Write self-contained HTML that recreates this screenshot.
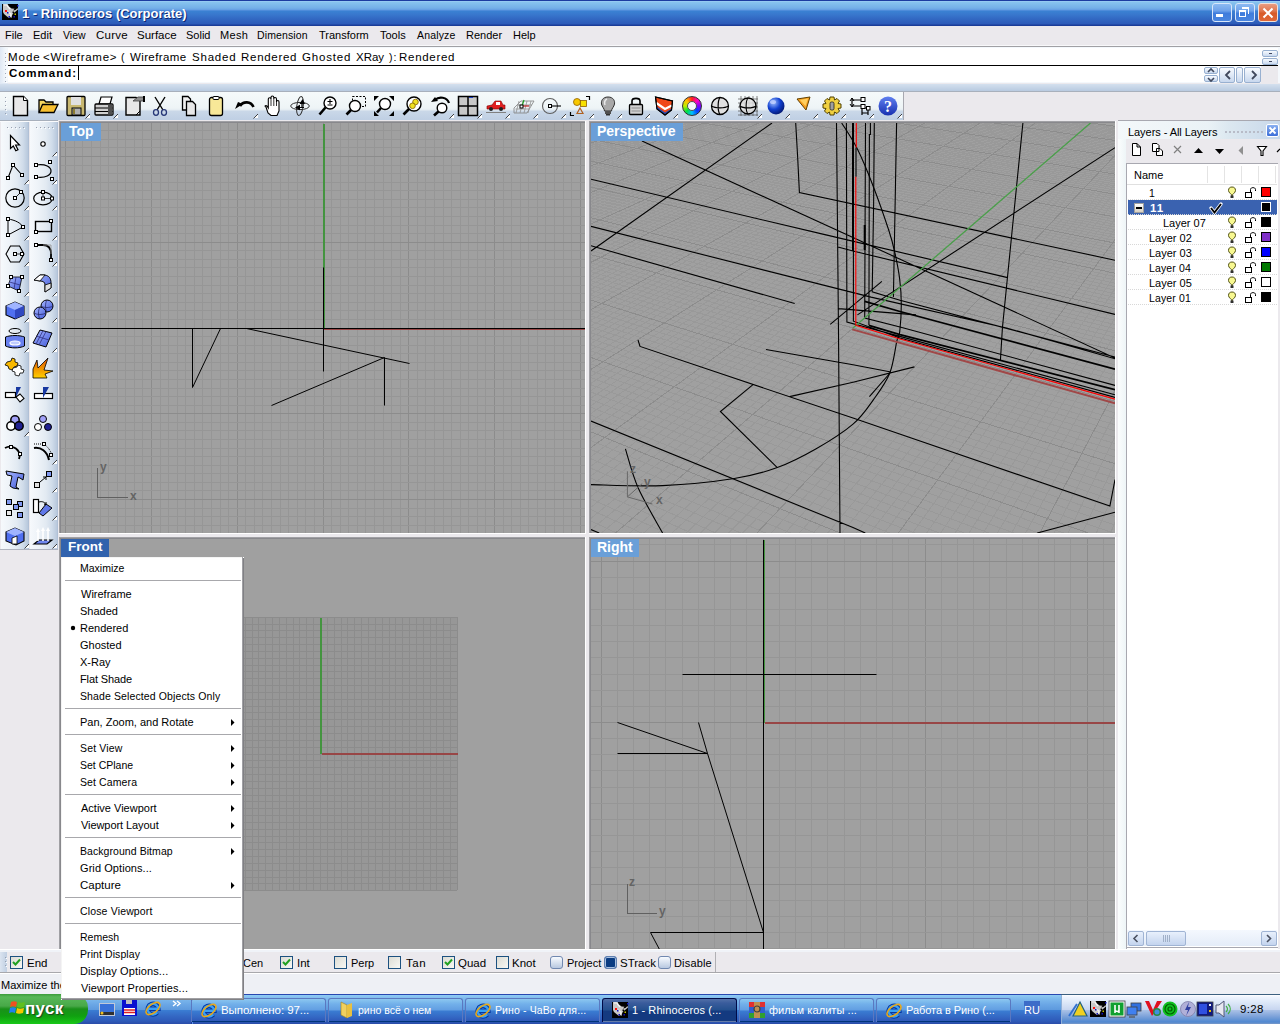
<!DOCTYPE html><html><head><meta charset="utf-8"><style>
html,body{margin:0;padding:0;}body{width:1280px;height:1024px;position:relative;overflow:hidden;background:#ebe9ed;font-family:'Liberation Sans', sans-serif;font-size:11px;}
div{box-sizing:border-box;} svg{position:absolute;overflow:visible;}
</style></head><body>
<div style="position:absolute;left:0px;top:0px;width:1280px;height:26px;background:linear-gradient(to bottom,#1c3ca0 0px,#1c3ca0 1px,#9ccff4 1px,#86c2ee 2.5px,#74b0e8 8px,#68a2e4 9.5px,#4e8cda 10.5px,#3a80d2 11.5px,#3876cc 15px,#3268c2 19px,#2c5ab8 24px,#1a3c98 25px,#1a3c98 26px);"></div>
<div style="position:absolute;left:22px;top:7px;font-family:'Liberation Sans', sans-serif;font-size:13px;font-weight:bold;font-style:normal;color:#fff;white-space:pre;line-height:1;letter-spacing:0.000px;text-shadow:1px 1px 0 #0c2470;">1 - Rhinoceros (Corporate)</div>
<div style="position:absolute;left:2px;top:4px;width:16px;height:16px;background:#000;"></div>
<svg style="left:2px;top:4px" width="16" height="16"><path d="M1 0 H5.5 L7 2.5 L9.5 4.5 L12.5 4.7 L11 6.5 L13.5 6 L15.5 4 L16 5.5 L13 8 L11 9.5 L10 11.5 L9.5 14 L8 13 L7 14 L5 12.5 L2 10 L1 8 Z" fill="#c8c8c8"/><path d="M2 1 L5 1 L6 3 L8 5" stroke="#f8f8f8" stroke-width="1.2" fill="none"/><path d="M6 8 L9 10 L8.5 12.5" stroke="#f0f0f0" stroke-width="1.5" fill="none"/><rect x="3" y="6" width="2" height="2" fill="#ff1010"/><rect x="5" y="8" width="1.5" height="1.5" fill="#1010c0"/><rect x="6.5" y="12" width="1.5" height="1.5" fill="#1010c0"/><rect x="11.5" y="12" width="1.5" height="1.5" fill="#1010c0"/><rect x="15" y="1" width="1.5" height="1.5" fill="#1010c0"/><rect x="12.5" y="9.5" width="1.5" height="1.5" fill="#c0c000"/><rect x="10.5" y="7.5" width="1.5" height="1.5" fill="#000"/></svg>
<div style="position:absolute;left:1212px;top:3px;width:20px;height:19px;background:linear-gradient(to bottom,#8cbaf2 0%,#6ea2ea 40%,#3f7cdc 55%,#4a86e0 100%);border:1px solid #d8e6fa;border-radius:3px;"></div>
<div style="position:absolute;left:1235px;top:3px;width:20px;height:19px;background:linear-gradient(to bottom,#8cbaf2 0%,#6ea2ea 40%,#3f7cdc 55%,#4a86e0 100%);border:1px solid #d8e6fa;border-radius:3px;"></div>
<div style="position:absolute;left:1258px;top:3px;width:20px;height:19px;background:linear-gradient(to bottom,#e89c80 0%,#e07850 40%,#d85a28 55%,#e06838 100%);border:1px solid #f0e0d8;border-radius:3px;"></div>
<div style="position:absolute;left:1216px;top:14px;width:7px;height:3px;background:#fff;"></div>
<div style="position:absolute;left:1239px;top:10px;width:7px;height:7px;border:1px solid #fff;border-top-width:2px;"></div>
<div style="position:absolute;left:1242px;top:7px;width:7px;height:7px;border:1px solid #fff;border-top-width:2px;border-left:none;border-bottom:none;"></div>
<svg style="left:1262px;top:7px" width="12" height="12"><path d="M1.5 1.5 L10.5 10.5 M10.5 1.5 L1.5 10.5" stroke="#fff" stroke-width="2"/></svg>
<div style="position:absolute;left:0px;top:26px;width:1280px;height:20px;background:#ebe9ed;"></div>
<div style="position:absolute;left:5px;top:30px;font-family:'Liberation Sans', sans-serif;font-size:11px;font-weight:normal;font-style:normal;color:#000;white-space:pre;line-height:1;letter-spacing:0.000px;">File</div>
<div style="position:absolute;left:33px;top:30px;font-family:'Liberation Sans', sans-serif;font-size:11px;font-weight:normal;font-style:normal;color:#000;white-space:pre;line-height:1;letter-spacing:0.000px;">Edit</div>
<div style="position:absolute;left:63px;top:30px;font-family:'Liberation Sans', sans-serif;font-size:10.5px;font-weight:normal;font-style:normal;color:#000;white-space:pre;line-height:1;letter-spacing:0.000px;">View</div>
<div style="position:absolute;left:96px;top:30px;font-family:'Liberation Sans', sans-serif;font-size:11.5px;font-weight:normal;font-style:normal;color:#000;white-space:pre;line-height:1;letter-spacing:0.250px;">Curve</div>
<div style="position:absolute;left:137px;top:30px;font-family:'Liberation Sans', sans-serif;font-size:11.5px;font-weight:normal;font-style:normal;color:#000;white-space:pre;line-height:1;letter-spacing:0.000px;">Surface</div>
<div style="position:absolute;left:186px;top:30px;font-family:'Liberation Sans', sans-serif;font-size:11px;font-weight:normal;font-style:normal;color:#000;white-space:pre;line-height:1;letter-spacing:0.000px;">Solid</div>
<div style="position:absolute;left:220px;top:30px;font-family:'Liberation Sans', sans-serif;font-size:11px;font-weight:normal;font-style:normal;color:#000;white-space:pre;line-height:1;letter-spacing:0.333px;">Mesh</div>
<div style="position:absolute;left:257px;top:30px;font-family:'Liberation Sans', sans-serif;font-size:10.5px;font-weight:normal;font-style:normal;color:#000;white-space:pre;line-height:1;letter-spacing:0.125px;">Dimension</div>
<div style="position:absolute;left:319px;top:30px;font-family:'Liberation Sans', sans-serif;font-size:11px;font-weight:normal;font-style:normal;color:#000;white-space:pre;line-height:1;letter-spacing:0.000px;">Transform</div>
<div style="position:absolute;left:380px;top:30px;font-family:'Liberation Sans', sans-serif;font-size:11px;font-weight:normal;font-style:normal;color:#000;white-space:pre;line-height:1;letter-spacing:0.000px;">Tools</div>
<div style="position:absolute;left:417px;top:30px;font-family:'Liberation Sans', sans-serif;font-size:10.5px;font-weight:normal;font-style:normal;color:#000;white-space:pre;line-height:1;letter-spacing:0.167px;">Analyze</div>
<div style="position:absolute;left:466px;top:30px;font-family:'Liberation Sans', sans-serif;font-size:11px;font-weight:normal;font-style:normal;color:#000;white-space:pre;line-height:1;letter-spacing:0.000px;">Render</div>
<div style="position:absolute;left:513px;top:30px;font-family:'Liberation Sans', sans-serif;font-size:11px;font-weight:normal;font-style:normal;color:#000;white-space:pre;line-height:1;letter-spacing:0.000px;">Help</div>
<div style="position:absolute;left:0px;top:45px;width:1280px;height:1px;background:#f8f8fa;"></div>
<div style="position:absolute;left:0px;top:46px;width:1280px;height:1px;background:#a0a0a4;"></div>
<div style="position:absolute;left:0px;top:47px;width:1280px;height:36px;background:linear-gradient(to right,#dfe8f4,#f4f8fc 6px,#f4f8fc);"></div>
<div style="position:absolute;left:8px;top:48px;width:1270px;height:34px;background:#fff;"></div>
<div style="position:absolute;left:8px;top:65px;width:1270px;height:1px;background:#000;"></div>
<div style="position:absolute;left:8px;top:52px;font-family:'Liberation Sans', sans-serif;font-size:11.5px;font-weight:normal;font-style:normal;color:#000;white-space:pre;line-height:1;letter-spacing:1.000px;">Mode</div>
<div style="position:absolute;left:43px;top:52px;font-family:'Liberation Sans', sans-serif;font-size:11.5px;font-weight:normal;font-style:normal;color:#000;white-space:pre;line-height:1;letter-spacing:0.700px;">&lt;Wireframe&gt;</div>
<div style="position:absolute;left:121px;top:52px;font-family:'Liberation Sans', sans-serif;font-size:10.5px;font-weight:normal;font-style:normal;color:#000;white-space:pre;line-height:1;letter-spacing:0.000px;">(</div>
<div style="position:absolute;left:130px;top:52px;font-family:'Liberation Sans', sans-serif;font-size:11.5px;font-weight:normal;font-style:normal;color:#000;white-space:pre;line-height:1;letter-spacing:0.375px;">Wireframe</div>
<div style="position:absolute;left:192px;top:52px;font-family:'Liberation Sans', sans-serif;font-size:11.5px;font-weight:normal;font-style:normal;color:#000;white-space:pre;line-height:1;letter-spacing:0.800px;">Shaded</div>
<div style="position:absolute;left:241px;top:52px;font-family:'Liberation Sans', sans-serif;font-size:11.5px;font-weight:normal;font-style:normal;color:#000;white-space:pre;line-height:1;letter-spacing:0.714px;">Rendered</div>
<div style="position:absolute;left:302px;top:52px;font-family:'Liberation Sans', sans-serif;font-size:11.5px;font-weight:normal;font-style:normal;color:#000;white-space:pre;line-height:1;letter-spacing:0.833px;">Ghosted</div>
<div style="position:absolute;left:356px;top:52px;font-family:'Liberation Sans', sans-serif;font-size:11.5px;font-weight:normal;font-style:normal;color:#000;white-space:pre;line-height:1;letter-spacing:0.000px;">XRay</div>
<div style="position:absolute;left:389px;top:52px;font-family:'Liberation Sans', sans-serif;font-size:10.5px;font-weight:normal;font-style:normal;color:#000;white-space:pre;line-height:1;letter-spacing:1.000px;">):</div>
<div style="position:absolute;left:399px;top:52px;font-family:'Liberation Sans', sans-serif;font-size:11.5px;font-weight:normal;font-style:normal;color:#000;white-space:pre;line-height:1;letter-spacing:0.714px;">Rendered</div>
<div style="position:absolute;left:9px;top:68px;font-family:'Liberation Sans', sans-serif;font-size:11.5px;font-weight:bold;font-style:normal;color:#000;white-space:pre;line-height:1;letter-spacing:1.000px;">Command:</div>
<div style="position:absolute;left:78px;top:66px;width:1px;height:14px;background:#000;"></div>
<div style="position:absolute;left:1261px;top:66px;width:17px;height:17px;background:#ebe9ed;"></div>
<div style="position:absolute;left:5px;top:53px;width:1px;height:1px;background:#a0a8b8;"></div>
<div style="position:absolute;left:6px;top:54px;width:1px;height:1px;background:#fff;"></div>
<div style="position:absolute;left:5px;top:57px;width:1px;height:1px;background:#a0a8b8;"></div>
<div style="position:absolute;left:6px;top:58px;width:1px;height:1px;background:#fff;"></div>
<div style="position:absolute;left:5px;top:61px;width:1px;height:1px;background:#a0a8b8;"></div>
<div style="position:absolute;left:6px;top:62px;width:1px;height:1px;background:#fff;"></div>
<div style="position:absolute;left:5px;top:65px;width:1px;height:1px;background:#a0a8b8;"></div>
<div style="position:absolute;left:6px;top:66px;width:1px;height:1px;background:#fff;"></div>
<div style="position:absolute;left:5px;top:69px;width:1px;height:1px;background:#a0a8b8;"></div>
<div style="position:absolute;left:6px;top:70px;width:1px;height:1px;background:#fff;"></div>
<div style="position:absolute;left:5px;top:73px;width:1px;height:1px;background:#a0a8b8;"></div>
<div style="position:absolute;left:6px;top:74px;width:1px;height:1px;background:#fff;"></div>
<div style="position:absolute;left:5px;top:77px;width:1px;height:1px;background:#a0a8b8;"></div>
<div style="position:absolute;left:6px;top:78px;width:1px;height:1px;background:#fff;"></div>
<div style="position:absolute;left:5px;top:81px;width:1px;height:1px;background:#a0a8b8;"></div>
<div style="position:absolute;left:6px;top:82px;width:1px;height:1px;background:#fff;"></div>
<div style="position:absolute;left:1262px;top:50px;width:16px;height:7px;background:linear-gradient(to bottom,#f8fbff,#c8d8ee);border:1px solid #98b0d0;border-radius:2px;"></div>
<div style="position:absolute;left:1262px;top:58px;width:16px;height:7px;background:linear-gradient(to bottom,#f8fbff,#c8d8ee);border:1px solid #98b0d0;border-radius:2px;"></div>
<div style="position:absolute;left:1269px;top:53px;width:3px;height:1px;background:#404860;"></div>
<div style="position:absolute;left:1269px;top:61px;width:3px;height:1px;background:#404860;"></div>
<div style="position:absolute;left:1204px;top:67px;width:14px;height:7px;background:linear-gradient(to bottom,#f8fbff,#c8d8ee);border:1px solid #98b0d0;border-radius:2px;"></div>
<div style="position:absolute;left:1204px;top:75px;width:14px;height:7px;background:linear-gradient(to bottom,#f8fbff,#c8d8ee);border:1px solid #98b0d0;border-radius:2px;"></div>
<div style="position:absolute;left:1219px;top:67px;width:16px;height:16px;background:linear-gradient(to bottom,#f8fbff,#c8d8ee);border:1px solid #98b0d0;border-radius:2px;"></div>
<div style="position:absolute;left:1236px;top:67px;width:7px;height:16px;background:linear-gradient(to bottom,#f8fbff,#c8d8ee);border:1px solid #98b0d0;border-radius:2px;"></div>
<div style="position:absolute;left:1244px;top:67px;width:17px;height:16px;background:linear-gradient(to bottom,#f8fbff,#c8d8ee);border:1px solid #98b0d0;border-radius:2px;"></div>
<svg style="left:1204px;top:67px" width="60" height="16"><path d="M4 5 L7 2 L10 5 M4 11 L7 14 L10 11" stroke="#40485c" stroke-width="1.6" fill="none"/><path d="M26 4 L22 8 L26 12 M48 4 L52 8 L48 12" stroke="#40485c" stroke-width="1.8" fill="none"/></svg>
<div style="position:absolute;left:0px;top:83px;width:1280px;height:38px;background:#ebe9ed;"></div>
<div style="position:absolute;left:0px;top:83px;width:8px;height:1px;background:#dfe8f4;"></div>
<div style="position:absolute;left:0px;top:84px;width:1280px;height:7px;background:linear-gradient(to bottom,#d4e0ee,#b8cae0);"></div>
<div style="position:absolute;left:0px;top:91px;width:1280px;height:1px;background:#a8b0bc;"></div>
<div style="position:absolute;left:0px;top:92px;width:903px;height:28px;background:linear-gradient(to bottom,#f6fafb 0px,#eef4f6 16px,#e4ecf2 18px,#cad8e8 19px,#c0d0e4 27px);"></div>
<div style="position:absolute;left:903px;top:92px;width:1px;height:28px;background:#a8a8b0;"></div>
<div style="position:absolute;left:0px;top:120px;width:1280px;height:1px;background:#ebe9ed;"></div>
<div style="position:absolute;left:0px;top:120px;width:58px;height:1px;background:#a8b0bc;"></div>
<div style="position:absolute;left:5px;top:97px;width:1px;height:1px;background:#98a0b0;"></div>
<div style="position:absolute;left:6px;top:98px;width:1px;height:1px;background:#fff;"></div>
<div style="position:absolute;left:5px;top:101px;width:1px;height:1px;background:#98a0b0;"></div>
<div style="position:absolute;left:6px;top:102px;width:1px;height:1px;background:#fff;"></div>
<div style="position:absolute;left:5px;top:105px;width:1px;height:1px;background:#98a0b0;"></div>
<div style="position:absolute;left:6px;top:106px;width:1px;height:1px;background:#fff;"></div>
<div style="position:absolute;left:5px;top:109px;width:1px;height:1px;background:#98a0b0;"></div>
<div style="position:absolute;left:6px;top:110px;width:1px;height:1px;background:#fff;"></div>
<div style="position:absolute;left:5px;top:113px;width:1px;height:1px;background:#98a0b0;"></div>
<div style="position:absolute;left:6px;top:114px;width:1px;height:1px;background:#fff;"></div>
<svg style="left:0;top:0" width="1280" height="130"><defs>
<linearGradient id="cw" x1="0" y1="0" x2="1" y2="1"><stop offset="0" stop-color="#ff2020"/><stop offset="0.25" stop-color="#f0f020"/><stop offset="0.5" stop-color="#20e040"/><stop offset="0.75" stop-color="#2040ff"/><stop offset="1" stop-color="#e020e0"/></linearGradient>
<radialGradient id="bs" cx="0.35" cy="0.3" r="0.8"><stop offset="0" stop-color="#a0c0ff"/><stop offset="0.5" stop-color="#1040d0"/><stop offset="1" stop-color="#001060"/></radialGradient>
<linearGradient id="hb" x1="0" y1="0" x2="0" y2="1"><stop offset="0" stop-color="#6080f0"/><stop offset="1" stop-color="#1830b0"/></linearGradient>
<linearGradient id="bf" x1="0" y1="0" x2="1" y2="1"><stop offset="0" stop-color="#a8b8ff"/><stop offset="1" stop-color="#4058d8"/></linearGradient>
<linearGradient id="og" x1="0" y1="0" x2="0" y2="1"><stop offset="0" stop-color="#e05000"/><stop offset="1" stop-color="#ffd000"/></linearGradient>
</defs><g transform="translate(10,96)"><path d="M3.5 0.5 H13.5 L17.5 4.5 V19.5 H3.5 Z" fill="#e8e8e8" stroke="#000" stroke-width="1.4"/><path d="M13.5 0.5 V4.5 H17.5" fill="#fff" stroke="#000" stroke-width="1"/></g><g transform="translate(38,96)"><path d="M1 16 V4 H6 L8 6 H15 V8" fill="#f8d860" stroke="#000" stroke-width="1.3"/><path d="M1 16.5 L4.5 8.5 H20 L16 16.5 Z" fill="#f8c030" stroke="#000" stroke-width="1.3"/></g><g transform="translate(66,96)"><rect x="1" y="0.5" width="18" height="19" rx="1" fill="#c8b870" stroke="#000" stroke-width="1.3"/><rect x="5" y="1" width="10" height="8" fill="#e0e0e0"/><rect x="6" y="12" width="9" height="7" fill="#b0b0b0" stroke="#000" stroke-width="1"/><rect x="7" y="13" width="2" height="5" fill="#8c7c30"/></g><path d="M86 118 L90 114 L90 118 Z" fill="#fff"/><path d="M85.5 118.5 L90 114" stroke="#404040" stroke-width="1"/><g transform="translate(94,96)"><path d="M5 8 L7 1 H18 L16 8 Z" fill="#fff" stroke="#000" stroke-width="1.2"/><rect x="1" y="8" width="18" height="11" rx="1" fill="#d0d0d0" stroke="#000" stroke-width="1.3"/><path d="M1 12 H19 M1 15.5 H19" stroke="#000" stroke-width="1.2"/><rect x="14" y="8.5" width="4.5" height="10" fill="#505050"/></g><path d="M114 118 L118 114 L118 118 Z" fill="#fff"/><path d="M113.5 118.5 L118 114" stroke="#404040" stroke-width="1"/><g transform="translate(125,96)"><path d="M1 1.5 H11 L15 5 V19 H1 Z" fill="#e8e8e8" stroke="#000" stroke-width="1.4"/><path d="M8 5 L13 1 H19 V5 H13 Z" fill="#909090" stroke="#404040" stroke-width="0.8"/><rect x="18" y="0" width="2" height="6" fill="#000"/><path d="M11 19 L15 15" stroke="#000" stroke-width="1"/></g><g transform="translate(150,96)"><path d="M5 1 L13 14 M15 1 L7 14" stroke="#000" stroke-width="1.4"/><ellipse cx="6" cy="16.5" rx="2.5" ry="2.8" fill="none" stroke="#283878" stroke-width="1.3"/><ellipse cx="14" cy="16.5" rx="2.5" ry="2.8" fill="none" stroke="#283878" stroke-width="1.3"/></g><g transform="translate(179,96)"><path d="M3.5 0.5 H9 L11.5 3 V14 H3.5 Z" fill="#f0f0f0" stroke="#000" stroke-width="1.3"/><path d="M7.5 5.5 H13.5 L16.5 8.5 V19.5 H7.5 Z" fill="#e8e8e8" stroke="#000" stroke-width="1.3"/></g><g transform="translate(206,96)"><rect x="3.5" y="1.5" width="13" height="18" rx="2" fill="#f8e898" stroke="#000" stroke-width="1.3"/><rect x="7" y="0.5" width="6" height="3" rx="1" fill="#fff" stroke="#000" stroke-width="1"/></g><g transform="translate(234,99)"><path d="M19.5 8 C17 2 9 2 6 7" stroke="#000" stroke-width="2.6" fill="none"/><path d="M1 10 L9 5 L4 3 Z" fill="#000"/></g><path d="M254 118 L258 114 L258 118 Z" fill="#fff"/><path d="M253.5 118.5 L258 114" stroke="#404040" stroke-width="1"/><g transform="translate(262,96)"><path d="M4 11 L6 17 L9 19.5 H15 L17 15 V6 Q17 4.5 15.8 4.5 Q14.5 4.5 14.5 6 V3 Q14.5 1.5 13 1.5 Q11.8 1.5 11.8 3 V1.5 Q11.8 0 10.3 0 Q9 0 9 1.5 V3 Q9 1.8 7.6 1.8 Q6.3 1.8 6.3 3 V12 L5 10 Q3.8 9 3 10 Z" fill="#fff" stroke="#000" stroke-width="1.1"/><path d="M9 3 V10 M11.8 3 V10 M14.5 6 V10" stroke="#000" stroke-width="0.8"/></g><g transform="translate(290,96)"><ellipse cx="10" cy="10" rx="9.3" ry="3.6" fill="none" stroke="#303030" stroke-width="1"/><ellipse cx="10" cy="10" rx="3.2" ry="9.5" fill="none" stroke="#303030" stroke-width="1" transform="rotate(8 10 10)"/><path d="M12.5 3 L9.5 8 H15 Z M5 11.5 L10 8.8 V14.2 Z" fill="#000"/><path d="M12 8 V12 M10 11.5 H14" stroke="#000" stroke-width="1.2"/></g><g transform="translate(318,96)"><circle cx="12" cy="7" r="6" fill="#fff" stroke="#000" stroke-width="1.4"/><path d="M7.5 11.5 L1.5 18.5" stroke="#000" stroke-width="2.6"/><path d="M9.5 5.5 H14.5 M12 3 V8 M9.5 9 H14.5" stroke="#000" stroke-width="1.1"/></g><g transform="translate(346,96)"><rect x="6.5" y="0.5" width="13" height="10" fill="none" stroke="#000" stroke-width="1" stroke-dasharray="2 1.5"/><circle cx="9" cy="10" r="5.5" fill="#fff" stroke="#000" stroke-width="1.4"/><path d="M5 14 L0.5 18.5" stroke="#000" stroke-width="2.6"/></g><g transform="translate(374,96)"><circle cx="11" cy="8" r="5.5" fill="#fff" stroke="#000" stroke-width="1.4"/><path d="M7 12 L3 16.5" stroke="#000" stroke-width="2.6"/><path d="M0 0 H5 L0 5 Z M20 0 V5 L15 0 Z M0 20 V15 L5 20 Z M20 20 H15 L20 15 Z" fill="#000"/></g><g transform="translate(402,96)"><circle cx="12" cy="8" r="7" fill="#fff" stroke="#000" stroke-width="1.4"/><circle cx="13.5" cy="6" r="2.8" fill="#f0e020" stroke="#806000" stroke-width="0.8"/><circle cx="10.5" cy="9.8" r="2.8" fill="#f0e020" stroke="#806000" stroke-width="0.8"/><path d="M7 13 L1.5 18.5" stroke="#000" stroke-width="2.6"/></g><g transform="translate(430,96)"><circle cx="12" cy="12" r="4.8" fill="#fff" stroke="#000" stroke-width="1.4"/><path d="M8.5 15.5 L4 19.5" stroke="#000" stroke-width="2.6"/><path d="M19 7 C17 1 9 0 5 4" stroke="#000" stroke-width="2.2" fill="none"/><path d="M1 6 L8 5 L5 1 Z" fill="#000"/></g><path d="M450 118 L454 114 L454 118 Z" fill="#fff"/><path d="M449.5 118.5 L454 114" stroke="#404040" stroke-width="1"/><g transform="translate(458,96)"><rect x="0.5" y="0.5" width="19" height="19" fill="#c8c8c8" stroke="#000" stroke-width="1.5"/><path d="M10 0 V20 M0 10 H20" stroke="#000" stroke-width="1.5"/><rect x="11" y="1" width="4" height="1" fill="#2040c0"/></g><path d="M478 118 L482 114 L482 118 Z" fill="#fff"/><path d="M477.5 118.5 L482 114" stroke="#404040" stroke-width="1"/><g transform="translate(486,96)"><path d="M1 13 V10 L6 9 L9 5 H15 L17 9 H19 V13 Z" fill="#e02020" stroke="#800000" stroke-width="0.6"/><rect x="10" y="6" width="4" height="3" fill="#fff"/><circle cx="5" cy="13" r="2" fill="#202020"/><circle cx="15" cy="13" r="2" fill="#202020"/><path d="M0 16.5 H20" stroke="#808080" stroke-width="1"/></g><path d="M506 118 L510 114 L510 118 Z" fill="#fff"/><path d="M505.5 118.5 L510 114" stroke="#404040" stroke-width="1"/><g transform="translate(514,96)"><path d="M0 12 L7 5 H20 L13 17 H0 Z" fill="none" stroke="#808080" stroke-width="0.8"/><path d="M3 9 H18 M1.5 13 H15 M5 5 L2 17 M9 5 L6 17 M13 5 L10 17 M17 5 L14 17" stroke="#909090" stroke-width="0.8"/><path d="M8 10 H15" stroke="#c02020" stroke-width="1.2"/><path d="M8 10 L10 4" stroke="#20a020" stroke-width="1.2"/><rect x="6" y="9" width="3" height="3" fill="#fff" stroke="#000" stroke-width="1"/></g><path d="M534 118 L538 114 L538 118 Z" fill="#fff"/><path d="M533.5 118.5 L538 114" stroke="#404040" stroke-width="1"/><g transform="translate(542,96)"><circle cx="8" cy="10" r="7.5" fill="none" stroke="#606060" stroke-width="1.1"/><path d="M8 10 H19" stroke="#000" stroke-width="1.1"/><rect x="6.5" y="8.5" width="3" height="3" fill="#fff" stroke="#000" stroke-width="1"/></g><path d="M562 118 L566 114 L566 118 Z" fill="#fff"/><path d="M561.5 118.5 L566 114" stroke="#404040" stroke-width="1"/><g transform="translate(570,96)"><circle cx="7" cy="6" r="3.5" fill="#f8c800" stroke="#906000" stroke-width="0.8"/><rect x="10.5" y="4.5" width="6" height="6" fill="#f8e000" stroke="#906000" stroke-width="0.8"/><path d="M10 12 L13 17.5 H7 Z" fill="none" stroke="#b06020" stroke-width="1.2"/><path d="M16 0.5 H19.5 V4 M0.5 16 V19.5 H4" stroke="#000" stroke-width="1.2" fill="none"/></g><path d="M590 118 L594 114 L594 118 Z" fill="#fff"/><path d="M589.5 118.5 L594 114" stroke="#404040" stroke-width="1"/><g transform="translate(598,96)"><path d="M10 1 C4.5 1 3 5 3.5 8 C4 11 6.5 12.5 6.5 15 H13.5 C13.5 12.5 16 11 16.5 8 C17 5 15.5 1 10 1 Z" fill="#a8a8a8" stroke="#303030" stroke-width="1"/><path d="M7 9 C6 6 7 4 9 3" stroke="#e8e8e8" stroke-width="1.5" fill="none"/><rect x="7" y="15" width="6" height="3" fill="#505050"/><rect x="8" y="18" width="4" height="1.5" fill="#303030"/></g><path d="M618 118 L622 114 L622 118 Z" fill="#fff"/><path d="M617.5 118.5 L622 114" stroke="#404040" stroke-width="1"/><g transform="translate(626,96)"><path d="M6 8 V5 C6 1.5 14 1.5 14 5 V8" stroke="#000" stroke-width="1.6" fill="none"/><rect x="3.5" y="8.5" width="13" height="10" rx="1" fill="#d0d0d0" stroke="#000" stroke-width="1.3"/><path d="M5.5 12 H14.5 M5.5 15 H14.5" stroke="#909090" stroke-width="1"/></g><path d="M646 118 L650 114 L650 118 Z" fill="#fff"/><path d="M645.5 118.5 L650 114" stroke="#404040" stroke-width="1"/><g transform="translate(654,96)"><path d="M1.5 1 L18.5 5 L17.5 14 L11 19 L3 13 Z" fill="#f04818" stroke="#000" stroke-width="1.1"/><path d="M2.3 7 L11 13 L17.8 9.5" stroke="#fff" stroke-width="2.2" fill="none"/><path d="M2.8 10.5 L11 16.5 L17.6 12.5 L17.5 14 L11 19 L3 13 Z" fill="#2848b0"/><path d="M1.5 1 L18.5 5 L17.5 14 L11 19 L3 13 Z" fill="none" stroke="#000" stroke-width="1.1"/></g><path d="M674 118 L678 114 L678 118 Z" fill="#fff"/><path d="M673.5 118.5 L678 114" stroke="#404040" stroke-width="1"/><g transform="translate(682,96)"></g><path d="M702 118 L706 114 L706 118 Z" fill="#fff"/><path d="M701.5 118.5 L706 114" stroke="#404040" stroke-width="1"/><g transform="translate(710,96)"><circle cx="10" cy="10" r="8.5" fill="#e0e0e0" stroke="#000" stroke-width="1.3"/><path d="M1.5 10 C5 12.5 15 12.5 18.5 10 M10 1.5 C7.5 5 7.5 15 10 18.5" stroke="#000" stroke-width="1.2" fill="none"/></g><g transform="translate(738,96)"><path d="M0 3 H20 M0 7 H20 M0 11 H20 M0 15 H20 M0 19 H20 M3 0 V20 M7 0 V20 M11 0 V20 M15 0 V20 M19 0 V20" stroke="#505050" stroke-width="0.7"/><circle cx="10" cy="10" r="8" fill="#e0e0e0" fill-opacity="0.85" stroke="#000" stroke-width="1.3"/><path d="M2 10 C5 12.5 15 12.5 18 10 M10 2 C7.5 5 7.5 15 10 18" stroke="#000" stroke-width="1.1" fill="none"/></g><path d="M758 118 L762 114 L762 118 Z" fill="#fff"/><path d="M757.5 118.5 L762 114" stroke="#404040" stroke-width="1"/><g transform="translate(766,96)"><circle cx="10" cy="10" r="8.5" fill="url(#bs)"/><ellipse cx="7" cy="6" rx="3" ry="2" fill="#c0d0ff" opacity="0.8"/></g><path d="M786 118 L790 114 L790 118 Z" fill="#fff"/><path d="M785.5 118.5 L790 114" stroke="#404040" stroke-width="1"/><g transform="translate(794,96)"><path d="M3 3 L16 1 L12 14 Z" fill="#f8a020" stroke="#604000" stroke-width="1"/><path d="M6 4 L14 2.5 L11.5 10 Z" fill="#ffd060"/></g><path d="M814 118 L818 114 L818 118 Z" fill="#fff"/><path d="M813.5 118.5 L818 114" stroke="#404040" stroke-width="1"/><g transform="translate(822,96)"><path d="M8 1 H12 L12.5 4 L15 2.5 L17.5 5 L16 7.5 L19 8 V12 L16 12.5 L17.5 15 L15 17.5 L12.5 16 L12 19 H8 L7.5 16 L5 17.5 L2.5 15 L4 12.5 L1 12 V8 L4 7.5 L2.5 5 L5 2.5 L7.5 4 Z" fill="#f0d040" stroke="#504000" stroke-width="1"/><rect x="8" y="6" width="4" height="8" rx="1.5" fill="#a0a0a0" stroke="#202020" stroke-width="0.8"/></g><path d="M842 118 L846 114 L846 118 Z" fill="#fff"/><path d="M841.5 118.5 L846 114" stroke="#404040" stroke-width="1"/><g transform="translate(850,96)"><path d="M2 2 V10 M2 4 H12 M2 10 H12 M12 10 V19 M12 12 H18 M18 12 V19 M12 17 H18" stroke="#000" stroke-width="1.2" fill="none"/><rect x="11" y="1.5" width="4" height="4" fill="#fff" stroke="#000" stroke-width="1"/><rect x="11" y="8.5" width="4" height="4" fill="#fff" stroke="#000" stroke-width="1"/><rect x="16.5" y="10.5" width="3.5" height="3.5" fill="#fff" stroke="#000" stroke-width="1"/><path d="M0 5 L2 2 L4 5 M0 8 L2 11 L4 8" stroke="#000" stroke-width="1" fill="none"/></g><path d="M870 118 L874 114 L874 118 Z" fill="#fff"/><path d="M869.5 118.5 L874 114" stroke="#404040" stroke-width="1"/><g transform="translate(878,96)"><circle cx="10" cy="10" r="9.5" fill="url(#hb)"/><text x="10" y="16" font-family="Liberation Serif" font-weight="bold" font-size="16" fill="#fff" text-anchor="middle">?</text></g><path d="M898 118 L902 114 L902 118 Z" fill="#fff"/><path d="M897.5 118.5 L902 114" stroke="#404040" stroke-width="1"/></svg>
<div style="position:absolute;left:682px;top:96px;width:20px;height:20px;border-radius:50%;background:conic-gradient(from 0deg,#ff2020,#ff00c0,#8000ff,#0040ff,#00c0ff,#00e040,#c0f000,#ffc000,#ff2020);border:1px solid #303030;"></div>
<div style="position:absolute;left:687px;top:101px;width:10px;height:10px;border-radius:50%;background:#f4f8fa;border:1px solid #505050;"></div>
<div style="position:absolute;left:0px;top:121px;width:58px;height:430px;background:#ebe9ed;"></div>
<div style="position:absolute;left:0px;top:121px;width:58px;height:1px;background:#fafbfd;"></div>
<div style="position:absolute;left:1px;top:122px;width:28px;height:427px;background:linear-gradient(to right,#f6f9fc 0px,#eef3f8 8px,#e2eaf2 16px,#d0dcea 22px,#b8c8dc 27px,#a8b8d0 28px);"></div>
<div style="position:absolute;left:7px;top:127px;width:1px;height:1px;background:#98a0b0;"></div>
<div style="position:absolute;left:8px;top:128px;width:1px;height:1px;background:#fff;"></div>
<div style="position:absolute;left:11px;top:127px;width:1px;height:1px;background:#98a0b0;"></div>
<div style="position:absolute;left:12px;top:128px;width:1px;height:1px;background:#fff;"></div>
<div style="position:absolute;left:15px;top:127px;width:1px;height:1px;background:#98a0b0;"></div>
<div style="position:absolute;left:16px;top:128px;width:1px;height:1px;background:#fff;"></div>
<div style="position:absolute;left:19px;top:127px;width:1px;height:1px;background:#98a0b0;"></div>
<div style="position:absolute;left:20px;top:128px;width:1px;height:1px;background:#fff;"></div>
<div style="position:absolute;left:23px;top:127px;width:1px;height:1px;background:#98a0b0;"></div>
<div style="position:absolute;left:24px;top:128px;width:1px;height:1px;background:#fff;"></div>
<div style="position:absolute;left:30px;top:122px;width:28px;height:427px;background:linear-gradient(to right,#f6f9fc 0px,#eef3f8 8px,#e2eaf2 16px,#d0dcea 22px,#b8c8dc 27px,#a8b8d0 28px);"></div>
<div style="position:absolute;left:36px;top:127px;width:1px;height:1px;background:#98a0b0;"></div>
<div style="position:absolute;left:37px;top:128px;width:1px;height:1px;background:#fff;"></div>
<div style="position:absolute;left:40px;top:127px;width:1px;height:1px;background:#98a0b0;"></div>
<div style="position:absolute;left:41px;top:128px;width:1px;height:1px;background:#fff;"></div>
<div style="position:absolute;left:44px;top:127px;width:1px;height:1px;background:#98a0b0;"></div>
<div style="position:absolute;left:45px;top:128px;width:1px;height:1px;background:#fff;"></div>
<div style="position:absolute;left:48px;top:127px;width:1px;height:1px;background:#98a0b0;"></div>
<div style="position:absolute;left:49px;top:128px;width:1px;height:1px;background:#fff;"></div>
<div style="position:absolute;left:52px;top:127px;width:1px;height:1px;background:#98a0b0;"></div>
<div style="position:absolute;left:53px;top:128px;width:1px;height:1px;background:#fff;"></div>
<div style="position:absolute;left:0px;top:549px;width:58px;height:1px;background:#b0b4c0;"></div>
<svg style="left:0;top:0" width="60" height="560"><defs>
<linearGradient id="Lcw" x1="0" y1="0" x2="1" y2="1"><stop offset="0" stop-color="#ff2020"/><stop offset="0.25" stop-color="#f0f020"/><stop offset="0.5" stop-color="#20e040"/><stop offset="0.75" stop-color="#2040ff"/><stop offset="1" stop-color="#e020e0"/></linearGradient>
<radialGradient id="Lbs" cx="0.35" cy="0.3" r="0.8"><stop offset="0" stop-color="#a0c0ff"/><stop offset="0.5" stop-color="#1040d0"/><stop offset="1" stop-color="#001060"/></radialGradient>
<linearGradient id="Lhb" x1="0" y1="0" x2="0" y2="1"><stop offset="0" stop-color="#6080f0"/><stop offset="1" stop-color="#1830b0"/></linearGradient>
<linearGradient id="Lbf" x1="0" y1="0" x2="1" y2="1"><stop offset="0" stop-color="#a8b8ff"/><stop offset="1" stop-color="#4058d8"/></linearGradient>
<linearGradient id="Log" x1="0" y1="0" x2="0" y2="1"><stop offset="0" stop-color="#e05000"/><stop offset="1" stop-color="#ffd000"/></linearGradient>
</defs><g transform="translate(5,134)"><path d="M5.5 1.5 V14.5 L8.3 12 L10.8 16.8 L13 15.7 L10.6 11 H14.5 Z" fill="#fff" stroke="#000" stroke-width="1.2"/></g><g transform="translate(33,134)"><circle cx="10" cy="10" r="2.2" fill="#fff" stroke="#000" stroke-width="1.1"/></g><path d="M53 156 L57 152 L57 156 Z" fill="#fff"/><path d="M52.5 156.5 L57 152" stroke="#404040" stroke-width="1"/><g transform="translate(5,162)"><path d="M3 16 L8 3 L17 13" stroke="#000" stroke-width="1.1" fill="none"/><rect x="1.5" y="14.5" width="3" height="3" fill="#fff" stroke="#000"/><rect x="6.5" y="1.5" width="3" height="3" fill="#fff" stroke="#000"/><rect x="15.5" y="11.5" width="3" height="3" fill="#fff" stroke="#000"/></g><path d="M25 184 L29 180 L29 184 Z" fill="#fff"/><path d="M24.5 184.5 L29 180" stroke="#404040" stroke-width="1"/><g transform="translate(33,162)"><path d="M3 3 C23 0 23 18 3 15" stroke="#000" stroke-width="1.2" fill="none"/><rect x="1.5" y="1.5" width="3" height="3" fill="#fff" stroke="#000"/><rect x="1.5" y="13.5" width="3" height="3" fill="#fff" stroke="#000"/><rect x="15.5" y="-1.5" width="3" height="3" fill="#fff" stroke="#000"/><rect x="17.5" y="15.5" width="3" height="3" fill="#fff" stroke="#000"/></g><path d="M53 184 L57 180 L57 184 Z" fill="#fff"/><path d="M52.5 184.5 L57 180" stroke="#404040" stroke-width="1"/><g transform="translate(5,188)"><circle cx="10" cy="10" r="9.2" fill="none" stroke="#000" stroke-width="1.2"/><path d="M10 10 L16 4" stroke="#000" stroke-width="0.8"/><rect x="8.5" y="8.5" width="3" height="3" fill="#fff" stroke="#000"/><rect x="14.5" y="2.5" width="3" height="3" fill="#fff" stroke="#000"/></g><path d="M25 210 L29 206 L29 210 Z" fill="#fff"/><path d="M24.5 210.5 L29 206" stroke="#404040" stroke-width="1"/><g transform="translate(33,188)"><ellipse cx="10" cy="10.5" rx="9.3" ry="6.3" fill="none" stroke="#000" stroke-width="1.2"/><path d="M10 4 V10.5 H19" stroke="#000" stroke-width="0.8" fill="none"/><rect x="8.5" y="2.5" width="3" height="3" fill="#fff" stroke="#000"/><rect x="8.5" y="9" width="3" height="3" fill="#fff" stroke="#000"/><rect x="17.5" y="9" width="3" height="3" fill="#fff" stroke="#000"/></g><path d="M53 210 L57 206 L57 210 Z" fill="#fff"/><path d="M52.5 210.5 L57 206" stroke="#404040" stroke-width="1"/><g transform="translate(5,218)"><path d="M3 1 C10 2 16 5 18 9 M3 1 V17 L18 9" stroke="#000" stroke-width="1" fill="none"/><rect x="1.5" y="-0.5" width="3" height="3" fill="#fff" stroke="#000"/><rect x="16.5" y="7.5" width="3" height="3" fill="#fff" stroke="#000"/><rect x="1.5" y="15.5" width="3" height="3" fill="#fff" stroke="#000"/></g><path d="M25 240 L29 236 L29 240 Z" fill="#fff"/><path d="M24.5 240.5 L29 236" stroke="#404040" stroke-width="1"/><g transform="translate(33,218)"><rect x="2.5" y="3.5" width="16" height="10" fill="none" stroke="#000" stroke-width="1.4"/><rect x="16.5" y="1.5" width="3" height="3" fill="#fff" stroke="#000"/><rect x="1.5" y="12.5" width="3" height="3" fill="#fff" stroke="#000"/></g><path d="M53 240 L57 236 L57 240 Z" fill="#fff"/><path d="M52.5 240.5 L57 236" stroke="#404040" stroke-width="1"/><g transform="translate(5,244)"><path d="M1 10 L5.5 2 H14.5 L19 10 L14.5 18 H5.5 Z" fill="none" stroke="#000" stroke-width="1.1"/><path d="M10 10 H16" stroke="#000" stroke-width="0.8"/><rect x="8.5" y="8.5" width="3" height="3" fill="#fff" stroke="#000"/><rect x="15.5" y="8.5" width="3" height="3" fill="#fff" stroke="#000"/></g><path d="M25 266 L29 262 L29 266 Z" fill="#fff"/><path d="M24.5 266.5 L29 262" stroke="#404040" stroke-width="1"/><g transform="translate(33,244)"><path d="M3 1 H10 C15 1 18 4 18 10 V15" stroke="#000" stroke-width="1.8" fill="none"/><path d="M10 1 H18 V10" stroke="#909090" stroke-width="0.8" fill="none"/><rect x="1.5" y="-0.5" width="3" height="3" fill="#fff" stroke="#000"/><rect x="16.5" y="14.5" width="3" height="3" fill="#fff" stroke="#000"/></g><path d="M53 266 L57 262 L57 266 Z" fill="#fff"/><path d="M52.5 266.5 L57 262" stroke="#404040" stroke-width="1"/><g transform="translate(5,274)"><path d="M6 3 H17 L14 17 L3 12 Z" fill="url(#Lbf)" stroke="#000" stroke-width="0.8"/><path d="M11 3 L9 15 M4.5 8 L15 11" stroke="#303080" stroke-width="0.8"/><rect x="4.5" y="1.5" width="3" height="3" fill="#fff" stroke="#000"/><rect x="15.5" y="1.5" width="3" height="3" fill="#fff" stroke="#000"/><rect x="1.5" y="10.5" width="3" height="3" fill="#fff" stroke="#000"/><rect x="12.5" y="15.5" width="3" height="3" fill="#fff" stroke="#000"/></g><path d="M25 296 L29 292 L29 296 Z" fill="#fff"/><path d="M24.5 296.5 L29 292" stroke="#404040" stroke-width="1"/><g transform="translate(33,274)"><path d="M1 6 L7 1 H12 C16 2 18 4 18 9 V14 L12 18 V11 C12 8 10 7 7 7 Z" fill="url(#Lbf)" stroke="#000" stroke-width="1"/><path d="M1 6 L7 1 H12 L7 7 Z" fill="#fff" stroke="#000" stroke-width="0.8"/><path d="M12 11 L18 9 V14 L12 18 Z" fill="#e0e0e0" stroke="#000" stroke-width="0.8"/></g><path d="M53 296 L57 292 L57 296 Z" fill="#fff"/><path d="M52.5 296.5 L57 292" stroke="#404040" stroke-width="1"/><g transform="translate(5,300)"><path d="M1 6 L10 2 L19 6 V15 L10 19 L1 15 Z" fill="#5070f0" stroke="#000" stroke-width="1.1"/><path d="M1 6 L10 2 L19 6 L10 10 Z" fill="#a0b4ff"/><path d="M10 10 L19 6 V15 L10 19 Z" fill="#3048c0"/></g><path d="M25 322 L29 318 L29 322 Z" fill="#fff"/><path d="M24.5 322.5 L29 318" stroke="#404040" stroke-width="1"/><g transform="translate(33,300)"><circle cx="14" cy="6" r="6" fill="url(#Lbf)" stroke="#000" stroke-width="1"/><circle cx="7" cy="13" r="6" fill="url(#Lbf)" stroke="#000" stroke-width="1"/><path d="M1 13 C4 15 10 15 13 13 M7 7 C5 10 5 16 7 19 M8 6 C11 8 17 8 20 6 M14 0 C12 3 12 9 14 12" stroke="#202060" stroke-width="0.7" fill="none"/></g><path d="M53 322 L57 318 L57 322 Z" fill="#fff"/><path d="M52.5 322.5 L57 318" stroke="#404040" stroke-width="1"/><g transform="translate(5,330)"><ellipse cx="10" cy="1" rx="6" ry="2.5" fill="none" stroke="#000" stroke-width="1"/><path d="M0.5 7 C6 5 14 5 19.5 7 V16 C14 18.5 6 18.5 0.5 16 Z" fill="#6880f0" stroke="#000" stroke-width="1"/><ellipse cx="10" cy="13" rx="5" ry="2" fill="#c0ccff" stroke="#fff" stroke-width="1.2"/></g><path d="M25 352 L29 348 L29 352 Z" fill="#fff"/><path d="M24.5 352.5 L29 348" stroke="#404040" stroke-width="1"/><g transform="translate(33,330)"><path d="M7 0 L19 3 L13 17 L0 13 Z" fill="url(#Lbf)" stroke="#000" stroke-width="1"/><path d="M13 1.5 L6 15 M3 6 L16 10 M10 0.7 L3 14" stroke="#303080" stroke-width="0.8"/></g><path d="M53 352 L57 348 L57 352 Z" fill="#fff"/><path d="M52.5 352.5 L57 348" stroke="#404040" stroke-width="1"/><g transform="translate(5,358)"><path d="M2 4 L6 3 L7 0 L10 1 L10 4 L13 5 L12 8 L9 9 L8 12 L4 11 L3 8 L0 7 Z" fill="#f8b800" stroke="#000" stroke-width="0.8"/><path d="M8 10 L12 9 L13 7 L16 8 L16 11 L19 12 L18 15 L15 15 L14 18 L10 17 L10 14 L7 13 Z" fill="#fff" stroke="#000" stroke-width="0.8"/></g><g transform="translate(33,358)"><path d="M0 20 V11 L4 2 L5 10 L15 0 L11 12 L20 13 L12 16 L14 20 Z" fill="url(#Log)" stroke="#000" stroke-width="0.8"/></g><g transform="translate(5,386)"><rect x="0.5" y="6.5" width="10" height="5" fill="#fff" stroke="#000" stroke-width="1.2"/><path d="M11 1 H16 L11 11 Z" fill="#1838a0"/><path d="M11 11 L15 8 L19 12.5 L15 16 Z" fill="#fff" stroke="#000" stroke-width="1.1"/></g><g transform="translate(33,386)"><rect x="1.5" y="7.5" width="18" height="5" fill="#fff" stroke="#000" stroke-width="1.2"/><path d="M10 1 H16 L10 12 Z" fill="#1838a0"/></g><g transform="translate(5,414)"><circle cx="10" cy="6" r="4.2" fill="#a0a0f8" stroke="#000" stroke-width="1.5"/><circle cx="6" cy="12" r="4.2" fill="#fff" stroke="#000" stroke-width="1.5"/><circle cx="14" cy="12" r="4.2" fill="#202090" stroke="#000" stroke-width="1.5"/></g><path d="M25 436 L29 432 L29 436 Z" fill="#fff"/><path d="M24.5 436.5 L29 432" stroke="#404040" stroke-width="1"/><g transform="translate(33,414)"><circle cx="10" cy="5" r="3.5" fill="#a0a0f8" stroke="#000" stroke-width="1"/><circle cx="5" cy="13" r="3.5" fill="#fff" stroke="#000" stroke-width="1"/><circle cx="15" cy="13" r="3.5" fill="#202090" stroke="#000" stroke-width="1"/></g><g transform="translate(5,442)"><path d="M0 6 C5 3 13 5 15 13 L14 17" stroke="#000" stroke-width="1.8" fill="none"/><rect x="4.5" y="3.5" width="3" height="3" fill="#fff" stroke="#000"/><rect x="13.5" y="10.5" width="3" height="3" fill="#fff" stroke="#000"/></g><g transform="translate(33,442)"><path d="M1 6 C8 5 14 9 16 18" stroke="#000" stroke-width="2" fill="none"/><path d="M1 2 H10 M12 3 C15 5 17 8 19 13" stroke="#000" stroke-width="1" stroke-dasharray="1 1" fill="none"/><rect x="9.5" y="0.5" width="3" height="3" fill="#fff" stroke="#000"/><rect x="16.5" y="11.5" width="3" height="3" fill="#fff" stroke="#000"/></g><path d="M53 464 L57 460 L57 464 Z" fill="#fff"/><path d="M52.5 464.5 L57 460" stroke="#404040" stroke-width="1"/><g transform="translate(5,470)"><path d="M1 1 L19 4 L18 10 L15 8 L13 7 L11 17 L14 19 L8 18 L5 16 L7 6 L2 5 Z" fill="url(#Lbf)" stroke="#000" stroke-width="1"/></g><g transform="translate(33,470)"><rect x="1.5" y="12.5" width="5" height="5" fill="#e0e0e0" stroke="#000" stroke-width="1"/><rect x="13.5" y="1.5" width="5" height="5" fill="#8098f0" stroke="#000" stroke-width="1"/><path d="M7 12 L13 7 M10 7 H13 V10" stroke="#000" stroke-width="1" fill="none"/></g><path d="M53 492 L57 488 L57 492 Z" fill="#fff"/><path d="M52.5 492.5 L57 488" stroke="#404040" stroke-width="1"/><g transform="translate(5,498)"><rect x="1.5" y="1.5" width="5" height="5" fill="#8098f0" stroke="#000"/><rect x="12.5" y="3.5" width="5" height="5" fill="#8098f0" stroke="#000"/><rect x="8.5" y="6.5" width="5" height="5" fill="#8098f0" stroke="#000"/><rect x="1.5" y="12.5" width="5" height="5" fill="#e8e8e8" stroke="#000"/><rect x="12.5" y="14.5" width="5" height="5" fill="#8098f0" stroke="#000"/></g><g transform="translate(33,498)"><rect x="0.5" y="1.5" width="5" height="13" fill="#fff" stroke="#000" stroke-width="1.2"/><path d="M13 6 L19 10 L10 18 L6 15 Z" fill="#6078e8" stroke="#000" stroke-width="1"/><path d="M6 4 C9 3 12 4 13 7 M11 6 L13 7 L13 4" stroke="#000" stroke-width="1" fill="none"/></g><path d="M53 520 L57 516 L57 520 Z" fill="#fff"/><path d="M52.5 520.5 L57 516" stroke="#404040" stroke-width="1"/><g transform="translate(5,526)"><path d="M1 6 L10 2 L19 6 V15 L11 19 L1 15 Z" fill="#5070f0" stroke="#000" stroke-width="1.1"/><path d="M1 6 L10 2 L19 6 L10 10 Z" fill="#a0b4ff"/><path d="M7 12 L12 10 V18 L7 18 Z" fill="#fff" stroke="#000" stroke-width="0.8"/></g><path d="M25 548 L29 544 L29 548 Z" fill="#fff"/><path d="M24.5 548.5 L29 544" stroke="#404040" stroke-width="1"/><g transform="translate(33,526)"><path d="M1 18 L6 14 H19 L14 18 Z" fill="#7088f0" stroke="#000" stroke-width="1.2"/><path d="M5 15 V5 M10 15 V4 M15 15 V4" stroke="#fff" stroke-width="1.6"/><path d="M3 6 L5 2 L7 6 Z M8 5 L10 1 L12 5 Z M13 5 L15 1 L17 5 Z" fill="#fff"/></g><path d="M53 548 L57 544 L57 548 Z" fill="#fff"/><path d="M52.5 548.5 L57 544" stroke="#404040" stroke-width="1"/></svg>
<div style="position:absolute;left:58px;top:121px;width:1060px;height:829px;background:#ebe9ed;"></div>
<div style="position:absolute;left:59px;top:121px;width:526px;height:1px;background:#a0a0a4;"></div>
<div style="position:absolute;left:59px;top:121px;width:1px;height:412px;background:#a0a0a4;"></div>
<div style="position:absolute;left:60px;top:122px;width:525px;height:1px;background:#88888c;"></div>
<div style="position:absolute;left:60px;top:122px;width:1px;height:411px;background:#88888c;"></div>
<div style="position:absolute;left:585px;top:121px;width:1px;height:413px;background:#fff;"></div>
<div style="position:absolute;left:59px;top:533px;width:527px;height:1px;background:#fff;"></div>
<div style="position:absolute;left:61px;top:123px;width:524px;height:410px;background:#a0a0a0;"></div>
<div style="position:absolute;left:589px;top:121px;width:526px;height:1px;background:#a0a0a4;"></div>
<div style="position:absolute;left:589px;top:121px;width:1px;height:412px;background:#a0a0a4;"></div>
<div style="position:absolute;left:590px;top:122px;width:525px;height:1px;background:#88888c;"></div>
<div style="position:absolute;left:590px;top:122px;width:1px;height:411px;background:#88888c;"></div>
<div style="position:absolute;left:1115px;top:121px;width:1px;height:413px;background:#fff;"></div>
<div style="position:absolute;left:589px;top:533px;width:527px;height:1px;background:#fff;"></div>
<div style="position:absolute;left:591px;top:123px;width:524px;height:410px;background:#a0a0a0;"></div>
<div style="position:absolute;left:59px;top:537px;width:526px;height:1px;background:#a0a0a4;"></div>
<div style="position:absolute;left:59px;top:537px;width:1px;height:412px;background:#a0a0a4;"></div>
<div style="position:absolute;left:60px;top:538px;width:525px;height:1px;background:#88888c;"></div>
<div style="position:absolute;left:60px;top:538px;width:1px;height:411px;background:#88888c;"></div>
<div style="position:absolute;left:585px;top:537px;width:1px;height:413px;background:#fff;"></div>
<div style="position:absolute;left:59px;top:949px;width:527px;height:1px;background:#fff;"></div>
<div style="position:absolute;left:61px;top:539px;width:524px;height:410px;background:#a0a0a0;"></div>
<div style="position:absolute;left:589px;top:537px;width:526px;height:1px;background:#a0a0a4;"></div>
<div style="position:absolute;left:589px;top:537px;width:1px;height:412px;background:#a0a0a4;"></div>
<div style="position:absolute;left:590px;top:538px;width:525px;height:1px;background:#88888c;"></div>
<div style="position:absolute;left:590px;top:538px;width:1px;height:411px;background:#88888c;"></div>
<div style="position:absolute;left:1115px;top:537px;width:1px;height:413px;background:#fff;"></div>
<div style="position:absolute;left:589px;top:949px;width:527px;height:1px;background:#fff;"></div>
<div style="position:absolute;left:591px;top:539px;width:524px;height:410px;background:#a0a0a0;"></div>
<svg style="left:61px;top:123px;overflow:hidden" width="524" height="410" shape-rendering="crispEdges"><path d="M4.5 0 V410" stroke="#8c8c8c"/><path d="M13.5 0 V410" stroke="#969696"/><path d="M21.5 0 V410" stroke="#969696"/><path d="M30.5 0 V410" stroke="#969696"/><path d="M39.5 0 V410" stroke="#969696"/><path d="M47.5 0 V410" stroke="#969696"/><path d="M56.5 0 V410" stroke="#969696"/><path d="M64.5 0 V410" stroke="#969696"/><path d="M73.5 0 V410" stroke="#969696"/><path d="M81.5 0 V410" stroke="#969696"/><path d="M90.5 0 V410" stroke="#8c8c8c"/><path d="M99.5 0 V410" stroke="#969696"/><path d="M107.5 0 V410" stroke="#969696"/><path d="M116.5 0 V410" stroke="#969696"/><path d="M124.5 0 V410" stroke="#969696"/><path d="M133.5 0 V410" stroke="#969696"/><path d="M141.5 0 V410" stroke="#969696"/><path d="M150.5 0 V410" stroke="#969696"/><path d="M159.5 0 V410" stroke="#969696"/><path d="M167.5 0 V410" stroke="#969696"/><path d="M176.5 0 V410" stroke="#8c8c8c"/><path d="M184.5 0 V410" stroke="#969696"/><path d="M193.5 0 V410" stroke="#969696"/><path d="M201.5 0 V410" stroke="#969696"/><path d="M210.5 0 V410" stroke="#969696"/><path d="M219.5 0 V410" stroke="#969696"/><path d="M227.5 0 V410" stroke="#969696"/><path d="M236.5 0 V410" stroke="#969696"/><path d="M244.5 0 V410" stroke="#969696"/><path d="M253.5 0 V410" stroke="#969696"/><path d="M262.5 0 V410" stroke="#8c8c8c"/><path d="M270.5 0 V410" stroke="#969696"/><path d="M279.5 0 V410" stroke="#969696"/><path d="M287.5 0 V410" stroke="#969696"/><path d="M296.5 0 V410" stroke="#969696"/><path d="M304.5 0 V410" stroke="#969696"/><path d="M313.5 0 V410" stroke="#969696"/><path d="M322.5 0 V410" stroke="#969696"/><path d="M330.5 0 V410" stroke="#969696"/><path d="M339.5 0 V410" stroke="#969696"/><path d="M347.5 0 V410" stroke="#8c8c8c"/><path d="M356.5 0 V410" stroke="#969696"/><path d="M364.5 0 V410" stroke="#969696"/><path d="M373.5 0 V410" stroke="#969696"/><path d="M382.5 0 V410" stroke="#969696"/><path d="M390.5 0 V410" stroke="#969696"/><path d="M399.5 0 V410" stroke="#969696"/><path d="M407.5 0 V410" stroke="#969696"/><path d="M416.5 0 V410" stroke="#969696"/><path d="M424.5 0 V410" stroke="#969696"/><path d="M433.5 0 V410" stroke="#8c8c8c"/><path d="M442.5 0 V410" stroke="#969696"/><path d="M450.5 0 V410" stroke="#969696"/><path d="M459.5 0 V410" stroke="#969696"/><path d="M467.5 0 V410" stroke="#969696"/><path d="M476.5 0 V410" stroke="#969696"/><path d="M484.5 0 V410" stroke="#969696"/><path d="M493.5 0 V410" stroke="#969696"/><path d="M502.5 0 V410" stroke="#969696"/><path d="M510.5 0 V410" stroke="#969696"/><path d="M519.5 0 V410" stroke="#8c8c8c"/><path d="M0 7.5 H524" stroke="#969696"/><path d="M0 16.5 H524" stroke="#969696"/><path d="M0 24.5 H524" stroke="#969696"/><path d="M0 33.5 H524" stroke="#8c8c8c"/><path d="M0 42.5 H524" stroke="#969696"/><path d="M0 50.5 H524" stroke="#969696"/><path d="M0 59.5 H524" stroke="#969696"/><path d="M0 67.5 H524" stroke="#969696"/><path d="M0 76.5 H524" stroke="#969696"/><path d="M0 84.5 H524" stroke="#969696"/><path d="M0 93.5 H524" stroke="#969696"/><path d="M0 102.5 H524" stroke="#969696"/><path d="M0 110.5 H524" stroke="#969696"/><path d="M0 119.5 H524" stroke="#8c8c8c"/><path d="M0 127.5 H524" stroke="#969696"/><path d="M0 136.5 H524" stroke="#969696"/><path d="M0 144.5 H524" stroke="#969696"/><path d="M0 153.5 H524" stroke="#969696"/><path d="M0 162.5 H524" stroke="#969696"/><path d="M0 170.5 H524" stroke="#969696"/><path d="M0 179.5 H524" stroke="#969696"/><path d="M0 187.5 H524" stroke="#969696"/><path d="M0 196.5 H524" stroke="#969696"/><path d="M0 205.5 H524" stroke="#8c8c8c"/><path d="M0 213.5 H524" stroke="#969696"/><path d="M0 222.5 H524" stroke="#969696"/><path d="M0 230.5 H524" stroke="#969696"/><path d="M0 239.5 H524" stroke="#969696"/><path d="M0 247.5 H524" stroke="#969696"/><path d="M0 256.5 H524" stroke="#969696"/><path d="M0 265.5 H524" stroke="#969696"/><path d="M0 273.5 H524" stroke="#969696"/><path d="M0 282.5 H524" stroke="#969696"/><path d="M0 290.5 H524" stroke="#8c8c8c"/><path d="M0 299.5 H524" stroke="#969696"/><path d="M0 307.5 H524" stroke="#969696"/><path d="M0 316.5 H524" stroke="#969696"/><path d="M0 325.5 H524" stroke="#969696"/><path d="M0 333.5 H524" stroke="#969696"/><path d="M0 342.5 H524" stroke="#969696"/><path d="M0 350.5 H524" stroke="#969696"/><path d="M0 359.5 H524" stroke="#969696"/><path d="M0 367.5 H524" stroke="#969696"/><path d="M0 376.5 H524" stroke="#8c8c8c"/><path d="M0 385.5 H524" stroke="#969696"/><path d="M0 393.5 H524" stroke="#969696"/><path d="M0 402.5 H524" stroke="#969696"/></svg>
<svg style="left:61px;top:123px;overflow:hidden" width="524" height="410" shape-rendering="crispEdges"><path d="M262.5 0.5 L262.5 205.5" stroke="#43943f" stroke-width="1" fill="none"/><path d="M263.5 0.5 L263.5 205.5" stroke="#43943f" stroke-width="1" fill="none"/><path d="M262.5 205.5 L524.5 205.5" stroke="#984646" stroke-width="1" fill="none"/><path d="M262.5 206.5 L524.5 206.5" stroke="#984646" stroke-width="1" fill="none"/></svg>
<svg style="left:61px;top:123px;overflow:hidden" width="524" height="410"><path d="M0.5 205.5 L524.5 205.5" stroke="#000" stroke-width="1" fill="none"/><path d="M262.5 144.5 L262.5 248.5" stroke="#000" stroke-width="1" fill="none"/><path d="M131.5 205.5 L131.5 264.5 L159.5 205.5" stroke="#000" stroke-width="1" fill="none"/><path d="M185.5 205.5 L348.5 240.5" stroke="#000" stroke-width="1" fill="none"/><path d="M210.5 282.5 L323.5 234.5 L323.5 282.5" stroke="#000" stroke-width="1" fill="none"/></svg>
<svg style="left:61px;top:123px;overflow:hidden" width="524" height="410" shape-rendering="crispEdges"><path d="M36.5 344.5 L36.5 374.5 L66.5 374.5" stroke="#606060" stroke-width="1" fill="none"/></svg>
<div style="position:absolute;left:100px;top:461px;font-family:'Liberation Sans', sans-serif;font-size:12px;font-weight:bold;font-style:normal;color:#646464;white-space:pre;line-height:1;letter-spacing:0.000px;">y</div>
<div style="position:absolute;left:130px;top:490px;font-family:'Liberation Sans', sans-serif;font-size:12px;font-weight:bold;font-style:normal;color:#646464;white-space:pre;line-height:1;letter-spacing:0.000px;">x</div>
<svg style="left:591px;top:539px;overflow:hidden" width="524" height="410" shape-rendering="crispEdges"><path d="M10.5 0 V410" stroke="#8c8c8c"/><path d="M26.5 0 V410" stroke="#969696"/><path d="M42.5 0 V410" stroke="#969696"/><path d="M58.5 0 V410" stroke="#969696"/><path d="M74.5 0 V410" stroke="#969696"/><path d="M91.5 0 V410" stroke="#969696"/><path d="M107.5 0 V410" stroke="#969696"/><path d="M123.5 0 V410" stroke="#969696"/><path d="M139.5 0 V410" stroke="#969696"/><path d="M155.5 0 V410" stroke="#969696"/><path d="M172.5 0 V410" stroke="#8c8c8c"/><path d="M188.5 0 V410" stroke="#969696"/><path d="M204.5 0 V410" stroke="#969696"/><path d="M220.5 0 V410" stroke="#969696"/><path d="M236.5 0 V410" stroke="#969696"/><path d="M253.5 0 V410" stroke="#969696"/><path d="M269.5 0 V410" stroke="#969696"/><path d="M285.5 0 V410" stroke="#969696"/><path d="M301.5 0 V410" stroke="#969696"/><path d="M317.5 0 V410" stroke="#969696"/><path d="M334.5 0 V410" stroke="#8c8c8c"/><path d="M350.5 0 V410" stroke="#969696"/><path d="M366.5 0 V410" stroke="#969696"/><path d="M382.5 0 V410" stroke="#969696"/><path d="M398.5 0 V410" stroke="#969696"/><path d="M415.5 0 V410" stroke="#969696"/><path d="M431.5 0 V410" stroke="#969696"/><path d="M447.5 0 V410" stroke="#969696"/><path d="M463.5 0 V410" stroke="#969696"/><path d="M479.5 0 V410" stroke="#969696"/><path d="M496.5 0 V410" stroke="#8c8c8c"/><path d="M512.5 0 V410" stroke="#969696"/><path d="M0 5.5 H524" stroke="#969696"/><path d="M0 22.5 H524" stroke="#8c8c8c"/><path d="M0 38.5 H524" stroke="#969696"/><path d="M0 54.5 H524" stroke="#969696"/><path d="M0 70.5 H524" stroke="#969696"/><path d="M0 86.5 H524" stroke="#969696"/><path d="M0 102.5 H524" stroke="#969696"/><path d="M0 118.5 H524" stroke="#969696"/><path d="M0 135.5 H524" stroke="#969696"/><path d="M0 151.5 H524" stroke="#969696"/><path d="M0 167.5 H524" stroke="#969696"/><path d="M0 183.5 H524" stroke="#8c8c8c"/><path d="M0 199.5 H524" stroke="#969696"/><path d="M0 215.5 H524" stroke="#969696"/><path d="M0 231.5 H524" stroke="#969696"/><path d="M0 248.5 H524" stroke="#969696"/><path d="M0 264.5 H524" stroke="#969696"/><path d="M0 280.5 H524" stroke="#969696"/><path d="M0 296.5 H524" stroke="#969696"/><path d="M0 312.5 H524" stroke="#969696"/><path d="M0 328.5 H524" stroke="#969696"/><path d="M0 345.5 H524" stroke="#8c8c8c"/><path d="M0 361.5 H524" stroke="#969696"/><path d="M0 377.5 H524" stroke="#969696"/><path d="M0 393.5 H524" stroke="#969696"/><path d="M0 409.5 H524" stroke="#969696"/></svg>
<svg style="left:591px;top:539px;overflow:hidden" width="524" height="410" shape-rendering="crispEdges"><path d="M173.5 0.5 L173.5 183.5" stroke="#43943f" stroke-width="1" fill="none"/><path d="M173.5 183.5 L524.5 183.5" stroke="#984646" stroke-width="1" fill="none"/><path d="M173.5 184.5 L524.5 184.5" stroke="#984646" stroke-width="1" fill="none"/><path d="M172.5 0.5 L172.5 410.5" stroke="#000" stroke-width="1" fill="none"/></svg>
<svg style="left:591px;top:539px;overflow:hidden" width="524" height="410"><path d="M91.5 135.5 L285.5 135.5" stroke="#000" stroke-width="1" fill="none"/><path d="M172.5 183.5 L172.5 410.5" stroke="#000" stroke-width="1" fill="none"/><path d="M26.5 183.5 L116.5 214.5" stroke="#000" stroke-width="1" fill="none"/><path d="M26.5 214.5 L116.5 214.5" stroke="#000" stroke-width="1" fill="none"/><path d="M107.5 183.5 L116.5 214.5 L172.5 393.5" stroke="#000" stroke-width="1" fill="none"/><path d="M59.5 393.5 L172.5 393.5" stroke="#000" stroke-width="1" fill="none"/><path d="M59.5 393.5 L68.5 410.5" stroke="#000" stroke-width="1" fill="none"/></svg>
<svg style="left:591px;top:539px;overflow:hidden" width="524" height="410" shape-rendering="crispEdges"><path d="M36.5 344.5 L36.5 374.5 L65.5 374.5" stroke="#606060" stroke-width="1" fill="none"/></svg>
<div style="position:absolute;left:629px;top:876px;font-family:'Liberation Sans', sans-serif;font-size:12px;font-weight:bold;font-style:normal;color:#646464;white-space:pre;line-height:1;letter-spacing:0.000px;">z</div>
<div style="position:absolute;left:659px;top:905px;font-family:'Liberation Sans', sans-serif;font-size:12px;font-weight:bold;font-style:normal;color:#646464;white-space:pre;line-height:1;letter-spacing:0.000px;">y</div>
<div style="position:absolute;left:185px;top:617px;width:272px;height:273px;background:#979797;"></div>
<svg style="left:61px;top:539px;overflow:hidden" width="524" height="410" shape-rendering="crispEdges"><path d="M122.5 78 V351" stroke="#8c8c8c"/><path d="M124 78.5 H396" stroke="#8c8c8c"/><path d="M129.5 78 V351" stroke="#8c8c8c"/><path d="M124 85.5 H396" stroke="#8c8c8c"/><path d="M136.5 78 V351" stroke="#8c8c8c"/><path d="M124 91.5 H396" stroke="#8c8c8c"/><path d="M143.5 78 V351" stroke="#8c8c8c"/><path d="M124 98.5 H396" stroke="#8c8c8c"/><path d="M149.5 78 V351" stroke="#8c8c8c"/><path d="M124 105.5 H396" stroke="#8c8c8c"/><path d="M156.5 78 V351" stroke="#8c8c8c"/><path d="M124 112.5 H396" stroke="#8c8c8c"/><path d="M163.5 78 V351" stroke="#8c8c8c"/><path d="M124 119.5 H396" stroke="#8c8c8c"/><path d="M170.5 78 V351" stroke="#8c8c8c"/><path d="M124 126.5 H396" stroke="#8c8c8c"/><path d="M177.5 78 V351" stroke="#8c8c8c"/><path d="M124 132.5 H396" stroke="#8c8c8c"/><path d="M184.5 78 V351" stroke="#8c8c8c"/><path d="M124 139.5 H396" stroke="#8c8c8c"/><path d="M191.5 78 V351" stroke="#8c8c8c"/><path d="M124 146.5 H396" stroke="#8c8c8c"/><path d="M197.5 78 V351" stroke="#8c8c8c"/><path d="M124 153.5 H396" stroke="#8c8c8c"/><path d="M204.5 78 V351" stroke="#8c8c8c"/><path d="M124 160.5 H396" stroke="#8c8c8c"/><path d="M211.5 78 V351" stroke="#8c8c8c"/><path d="M124 167.5 H396" stroke="#8c8c8c"/><path d="M218.5 78 V351" stroke="#8c8c8c"/><path d="M124 173.5 H396" stroke="#8c8c8c"/><path d="M225.5 78 V351" stroke="#8c8c8c"/><path d="M124 180.5 H396" stroke="#8c8c8c"/><path d="M232.5 78 V351" stroke="#8c8c8c"/><path d="M124 187.5 H396" stroke="#8c8c8c"/><path d="M238.5 78 V351" stroke="#8c8c8c"/><path d="M124 194.5 H396" stroke="#8c8c8c"/><path d="M245.5 78 V351" stroke="#8c8c8c"/><path d="M124 201.5 H396" stroke="#8c8c8c"/><path d="M252.5 78 V351" stroke="#8c8c8c"/><path d="M124 208.5 H396" stroke="#8c8c8c"/><path d="M259.5 78 V351" stroke="#8c8c8c"/><path d="M124 215.5 H396" stroke="#8c8c8c"/><path d="M266.5 78 V351" stroke="#8c8c8c"/><path d="M124 221.5 H396" stroke="#8c8c8c"/><path d="M273.5 78 V351" stroke="#8c8c8c"/><path d="M124 228.5 H396" stroke="#8c8c8c"/><path d="M280.5 78 V351" stroke="#8c8c8c"/><path d="M124 235.5 H396" stroke="#8c8c8c"/><path d="M286.5 78 V351" stroke="#8c8c8c"/><path d="M124 242.5 H396" stroke="#8c8c8c"/><path d="M293.5 78 V351" stroke="#8c8c8c"/><path d="M124 249.5 H396" stroke="#8c8c8c"/><path d="M300.5 78 V351" stroke="#8c8c8c"/><path d="M124 256.5 H396" stroke="#8c8c8c"/><path d="M307.5 78 V351" stroke="#8c8c8c"/><path d="M124 262.5 H396" stroke="#8c8c8c"/><path d="M314.5 78 V351" stroke="#8c8c8c"/><path d="M124 269.5 H396" stroke="#8c8c8c"/><path d="M321.5 78 V351" stroke="#8c8c8c"/><path d="M124 276.5 H396" stroke="#8c8c8c"/><path d="M328.5 78 V351" stroke="#8c8c8c"/><path d="M124 283.5 H396" stroke="#8c8c8c"/><path d="M334.5 78 V351" stroke="#8c8c8c"/><path d="M124 290.5 H396" stroke="#8c8c8c"/><path d="M341.5 78 V351" stroke="#8c8c8c"/><path d="M124 297.5 H396" stroke="#8c8c8c"/><path d="M348.5 78 V351" stroke="#8c8c8c"/><path d="M124 303.5 H396" stroke="#8c8c8c"/><path d="M355.5 78 V351" stroke="#8c8c8c"/><path d="M124 310.5 H396" stroke="#8c8c8c"/><path d="M362.5 78 V351" stroke="#8c8c8c"/><path d="M124 317.5 H396" stroke="#8c8c8c"/><path d="M369.5 78 V351" stroke="#8c8c8c"/><path d="M124 324.5 H396" stroke="#8c8c8c"/><path d="M375.5 78 V351" stroke="#8c8c8c"/><path d="M124 331.5 H396" stroke="#8c8c8c"/><path d="M382.5 78 V351" stroke="#8c8c8c"/><path d="M124 338.5 H396" stroke="#8c8c8c"/><path d="M389.5 78 V351" stroke="#8c8c8c"/><path d="M124 344.5 H396" stroke="#8c8c8c"/><path d="M396.5 78 V351" stroke="#8c8c8c"/><path d="M124 351.5 H396" stroke="#8c8c8c"/><path d="M259.5 78.5 L259.5 214.5" stroke="#43943f" stroke-width="1" fill="none"/><path d="M260.5 78.5 L260.5 214.5" stroke="#43943f" stroke-width="1" fill="none"/><path d="M260.5 214.5 L396.5 214.5" stroke="#984646" stroke-width="1" fill="none"/><path d="M260.5 215.5 L396.5 215.5" stroke="#984646" stroke-width="1" fill="none"/></svg>
<svg style="left:591px;top:123px;overflow:hidden" width="524" height="410" shape-rendering="crispEdges"><path d="M-1493.5 446.3L121.4 -52.2M-1466.3 433.4L-3263.1 22435.0M-1494.1 451.1L124.4 -51.8M-1440.2 425.4L-2425.5 22435.0M-1494.7 456.0L127.5 -51.3M-1414.8 417.6L-1588.0 22435.0M-1495.3 460.9L130.6 -50.9M-1389.9 409.9L-750.4 22435.0M-1495.9 465.9L133.7 -50.5M-1365.6 402.5L87.1 22435.0M-1496.5 471.0L136.8 -50.1M-1341.7 395.2L924.7 22435.0M-1497.1 476.2L140.0 -49.6M-1318.5 388.0L1762.3 22435.0M-1497.7 481.4L143.1 -49.2M-1295.7 381.0L2599.8 22435.0M-1498.3 486.7L146.3 -48.8M-1273.4 374.2L3437.4 22435.0M-1499.6 497.5L152.6 -47.9M-1230.1 360.9L5112.5 22435.0M-1500.3 503.0L155.8 -47.4M-1209.2 354.5L5950.0 22435.0M-1500.9 508.7L159.0 -47.0M-1188.7 348.2L6787.6 22435.0M-1501.6 514.4L162.3 -46.6M-1168.6 342.1L7625.1 22435.0M-1502.3 520.1L165.5 -46.1M-1148.9 336.0L8462.7 22435.0M-1503.0 526.0L168.7 -45.7M-1129.6 330.1L9300.3 22435.0M-1503.7 532.0L172.0 -45.2M-1110.6 324.3L10137.8 22435.0M-1504.4 538.0L175.3 -44.8M-1092.1 318.6L10975.4 22435.0M-1505.1 544.1L178.6 -44.3M-1073.9 313.0L11812.9 22435.0M-1506.6 556.7L185.2 -43.4M-1038.5 302.2L13488.0 22435.0M-1507.4 563.1L188.5 -42.9M-1021.3 296.9L14325.6 22435.0M-1508.2 569.7L191.9 -42.5M-1004.4 291.7L15163.1 22435.0M-1508.9 576.3L195.2 -42.0M-987.8 286.6L16000.7 22435.0M-1509.7 583.0L198.6 -41.6M-971.6 281.6L16838.2 22435.0M-1510.6 589.9L202.0 -41.1M-955.6 276.7L17675.8 22435.0M-1511.4 596.9L205.4 -40.6M-939.9 271.9L18513.4 22435.0M-1512.2 603.9L208.8 -40.1M-924.5 267.2L19350.9 22435.0M-1513.1 611.1L212.2 -39.7M-909.3 262.6L20188.5 22435.0M-1514.8 625.9L219.1 -38.7M-879.8 253.5L21863.6 22435.0M-1515.7 633.4L222.6 -38.2M-865.5 249.1L18327.3 18317.4M-1516.6 641.1L226.1 -37.8M-851.3 244.8L14183.6 13923.6M-1517.6 649.0L229.6 -37.3M-837.4 240.5L11624.8 11210.5M-1518.5 656.9L233.1 -36.8M-823.8 236.3L9887.6 9368.5M-1519.5 665.0L236.7 -36.3M-810.3 232.2L8631.1 8036.1M-1520.4 673.3L240.2 -35.8M-797.1 228.1L7679.9 7027.6M-1521.4 681.7L243.8 -35.3M-784.1 224.2L6934.9 6237.6M-1522.5 690.2L247.4 -34.8M-771.3 220.2L6335.6 5602.1M-1524.5 707.8L254.6 -33.8M-746.3 212.6L5430.9 4642.8M-1525.6 716.8L258.2 -33.3M-734.1 208.8L5081.2 4272.0M-1526.7 726.1L261.9 -32.8M-722.1 205.1L4780.6 3953.3M-1527.8 735.4L265.5 -32.3M-710.3 201.5L4519.5 3676.4M-1528.9 745.0L269.2 -31.8M-698.7 198.0L4290.6 3433.7M-1530.1 754.7L272.9 -31.3M-687.2 194.4L4088.2 3219.1M-1531.3 764.7L276.6 -30.8M-675.9 191.0L3908.1 3028.1M-1532.5 774.8L280.3 -30.3M-664.8 187.6L3746.7 2856.9M-1533.7 785.1L284.1 -29.8M-653.9 184.2L3601.2 2702.7M-1536.2 806.4L291.6 -28.7M-632.4 177.6L3349.6 2435.9M-1537.5 817.4L295.4 -28.2M-622.0 174.4L3240.0 2319.7M-1538.8 828.6L299.2 -27.7M-611.6 171.3L3139.5 2213.1M-1540.2 840.0L303.0 -27.2M-601.5 168.1L3046.9 2114.9M-1541.6 851.7L306.9 -26.6M-591.4 165.1L2961.4 2024.3M-1543.0 863.6L310.7 -26.1M-581.5 162.0L2882.2 1940.3M-1544.4 875.8L314.6 -25.6M-571.8 159.0L2808.6 1862.2M-1545.9 888.2L318.5 -25.0M-562.2 156.1L2740.0 1789.5M-1547.4 900.9L322.4 -24.5M-552.7 153.2L2676.0 1721.6M-1550.5 927.2L330.3 -23.4M-534.1 147.5L2559.8 1598.5M-1552.2 940.8L334.3 -22.9M-525.0 144.7L2507.0 1542.4M-1553.8 954.8L338.2 -22.3M-516.1 141.9L2457.2 1489.7M-1555.5 969.0L342.2 -21.8M-507.2 139.2L2410.3 1439.9M-1557.2 983.6L346.3 -21.2M-498.5 136.6L2366.0 1392.9M-1559.0 998.5L350.3 -20.7M-489.9 133.9L2324.0 1348.5M-1560.8 1013.8L354.4 -20.1M-481.4 131.3L2284.3 1306.3M-1562.7 1029.5L358.4 -19.5M-473.0 128.7L2246.6 1266.3M-1564.6 1045.5L362.5 -19.0M-464.7 126.2L2210.7 1228.3M-1568.5 1078.9L370.8 -17.8M-448.4 121.2L2144.1 1157.7M-1570.6 1096.2L374.9 -17.3M-440.4 118.8L2113.1 1124.8M-1572.7 1114.0L379.1 -16.7M-432.6 116.3L2083.5 1093.4M-1574.9 1132.2L383.3 -16.1M-424.8 114.0L2055.2 1063.4M-1577.1 1150.9L387.5 -15.5M-417.1 111.6L2028.2 1034.7M-1579.4 1170.2L391.7 -15.0M-409.6 109.3L2002.3 1007.3M-1581.7 1189.9L396.0 -14.4M-402.1 107.0L1977.4 980.9M-1584.1 1210.3L400.3 -13.8M-394.7 104.7L1953.6 955.6M-1586.6 1231.2L404.6 -13.2M-387.4 102.5L1930.7 931.4M-1591.8 1274.8L413.2 -12.0M-373.0 98.1L1887.6 885.6M-1594.5 1297.6L417.6 -11.4M-366.0 95.9L1867.2 864.1M-1597.2 1321.1L421.9 -10.8M-359.0 93.8L1847.6 843.3M-1600.1 1345.3L426.3 -10.2M-352.1 91.7L1828.7 823.3M-1603.1 1370.2L430.7 -9.6M-345.3 89.6L1810.5 803.9M-1606.1 1395.9L435.2 -9.0M-338.6 87.5L1792.9 785.3M-1609.3 1422.5L439.6 -8.4M-332.0 85.5L1776.0 767.3M-1612.5 1449.9L444.1 -7.7M-325.4 83.5L1759.5 749.9M-1615.9 1478.2L448.6 -7.1M-318.9 81.5L1743.7 733.1M-1622.9 1537.7L457.7 -5.9M-306.2 77.6L1713.5 701.1M-1626.6 1569.1L462.3 -5.2M-299.9 75.7L1699.1 685.8M-1630.5 1601.5L466.9 -4.6M-293.7 73.8L1685.2 671.0M-1634.5 1635.1L471.5 -4.0M-287.6 71.9L1671.7 656.7M-1638.6 1669.9L476.1 -3.3M-281.5 70.0L1658.6 642.8M-1642.9 1706.1L480.8 -2.7M-275.5 68.2L1645.9 629.4M-1647.3 1743.6L485.5 -2.0M-269.6 66.4L1633.5 616.3M-1652.0 1782.5L490.2 -1.4M-263.7 64.6L1621.6 603.6M-1656.8 1823.1L494.9 -0.7M-257.9 62.8L1609.9 591.2M-1667.0 1909.1L504.4 0.6M-246.5 59.3L1587.6 567.6M-1672.4 1954.8L509.2 1.2M-240.9 57.6L1576.9 556.2M-1678.0 2002.5L514.1 1.9M-235.4 55.9L1566.5 545.2M-1683.9 2052.3L518.9 2.6M-229.9 54.2L1556.4 534.5M-1690.1 2104.4L523.8 3.2M-224.4 52.5L1546.5 524.0M-1696.6 2158.8L528.7 3.9M-219.0 50.9L1536.9 513.8M-1703.3 2215.8L533.6 4.6M-213.7 49.2L1527.5 503.9M-1710.4 2275.6L538.6 5.3M-208.4 47.6L1518.4 494.2M-1717.8 2338.3L543.5 5.9M-203.2 46.0L1509.5 484.8M-1733.9 2473.4L553.6 7.3M-193.0 42.9L1492.4 466.6M-1742.5 2546.4L558.6 8.0M-187.9 41.3L1484.1 457.8M-1751.7 2623.4L563.7 8.7M-182.9 39.8L1476.0 449.3M-1761.3 2704.8L568.8 9.4M-177.9 38.2L1468.1 440.9M-1771.5 2790.8L573.9 10.1M-173.0 36.7L1460.4 432.7M-1782.3 2882.0L579.1 10.8M-168.2 35.2L1452.9 424.8M-1793.8 2978.8L584.3 11.6M-163.4 33.8L1445.6 417.0M-1806.0 3081.7L589.5 12.3M-158.6 32.3L1438.4 409.3M-1819.0 3191.4L594.7 13.0M-153.9 30.9L1431.3 401.9M-1847.8 3433.9L605.3 14.5M-144.6 28.0L1417.8 387.5M-1863.7 3568.4L610.6 15.2M-140.0 26.6L1411.2 380.5M-1880.9 3713.1L615.9 15.9M-135.5 25.2L1404.7 373.7M-1899.3 3869.1L621.3 16.7M-131.0 23.8L1398.4 367.0M-1919.4 4037.8L626.7 17.4M-126.5 22.5L1392.3 360.4M-1941.1 4220.9L632.2 18.2M-122.1 21.1L1386.2 354.0M-1964.7 4420.3L637.6 18.9M-117.7 19.8L1380.3 347.7M-1990.5 4638.2L643.1 19.7M-113.4 18.5L1374.5 341.6M-2018.9 4877.4L648.6 20.4M-109.1 17.1L1368.8 335.6M-2084.8 5433.5L659.8 22.0M-100.7 14.6L1357.7 323.8M-2123.5 5759.2L665.4 22.7M-96.5 13.3L1352.4 318.2M-2166.8 6124.4L671.0 23.5M-92.4 12.0L1347.1 312.6M-2215.6 6536.8L676.7 24.3M-88.3 10.8L1342.0 307.1M-2271.3 7006.1L682.4 25.1M-84.2 9.5L1336.9 301.7M-2335.2 7545.0L688.1 25.9M-80.2 8.3L1331.9 296.5M-2409.3 8170.1L693.9 26.7M-76.2 7.1L1327.1 291.3M-2496.3 8904.1L699.7 27.5M-72.3 5.8L1322.3 286.2M-2600.0 9778.1L705.5 28.3M-68.4 4.6L1317.6 281.3M-2880.4 12143.7L717.3 29.9M-60.7 2.3L1308.4 271.6M-3076.9 13800.3L723.2 30.7M-56.9 1.1L1304.0 266.8M-3333.8 15967.5L729.2 31.5M-53.1 -0.0L1299.6 262.2M-3684.4 18924.3L735.2 32.3M-49.3 -1.2L1295.3 257.6M-4028.6 22435.0L741.2 33.2M-45.6 -2.3L1291.1 253.2M-3551.5 22435.0L747.3 34.0M-42.0 -3.5L1286.9 248.8M-3074.4 22435.0L753.4 34.9M-38.3 -4.6L1282.8 244.4M-2597.4 22435.0L759.5 35.7M-34.7 -5.7L1278.8 240.2M-2120.3 22435.0L765.7 36.5M-31.1 -6.8L1274.9 236.0M-1166.1 22435.0L778.1 38.3M-24.0 -9.0L1267.2 227.8M-689.1 22435.0L784.4 39.1M-20.5 -10.0L1263.4 223.8M-212.0 22435.0L790.7 40.0M-17.1 -11.1L1259.7 219.9M265.1 22435.0L797.1 40.9M-13.6 -12.1L1256.1 216.1M742.2 22435.0L803.5 41.7M-10.2 -13.2L1252.5 212.3M1219.2 22435.0L809.9 42.6M-6.9 -14.2L1249.0 208.5M1696.3 22435.0L816.3 43.5M-3.5 -15.3L1245.5 204.9M2173.4 22435.0L822.8 44.4M-0.2 -16.3L1242.1 201.2M2650.5 22435.0L829.4 45.3M3.1 -17.3L1238.7 197.7M3604.6 22435.0L842.6 47.1M9.6 -19.3L1232.2 190.7M4081.7 22435.0L849.2 48.0M12.8 -20.3L1229.0 187.3M4558.8 22435.0L855.9 49.0M16.0 -21.2L1225.8 183.9M5035.8 22435.0L862.6 49.9M19.2 -22.2L1222.7 180.6M5512.9 22435.0L869.4 50.8M22.3 -23.2L1219.6 177.4M5990.0 22435.0L876.2 51.8M25.4 -24.1L1216.6 174.2M6467.1 22435.0L883.1 52.7M28.5 -25.1L1213.6 171.0M6944.1 22435.0L890.0 53.7M31.6 -26.0L1210.7 167.9M7421.2 22435.0L896.9 54.6M34.6 -26.9L1207.8 164.8M8375.4 22435.0L910.9 56.5M40.6 -28.8L1202.1 158.8M8852.4 22435.0L917.9 57.5M43.6 -29.7L1199.3 155.9M9329.5 22435.0L925.0 58.5M46.6 -30.6L1196.6 153.0M9806.6 22435.0L932.2 59.5M49.5 -31.5L1193.9 150.1M10283.7 22435.0L939.4 60.5M52.4 -32.4L1191.2 147.3M10760.7 22435.0L946.6 61.5M55.3 -33.3L1188.6 144.5M11237.8 22435.0L953.9 62.5M58.1 -34.2L1186.0 141.7M11714.9 22435.0L961.2 63.5M60.9 -35.0L1183.4 139.0M12192.0 22435.0L968.6 64.5M63.8 -35.9L1180.9 136.3M13146.1 22435.0L983.5 66.5M69.3 -37.6L1176.0 131.1M13623.2 22435.0L991.0 67.6M72.1 -38.4L1173.5 128.5M14100.3 22435.0L998.5 68.6M74.8 -39.3L1171.1 126.0M14577.3 22435.0L1006.2 69.7M77.5 -40.1L1168.8 123.5M15054.4 22435.0L1013.8 70.7M80.2 -40.9L1166.4 121.0M15531.5 22435.0L1021.5 71.8M82.9 -41.7L1164.1 118.6M16008.6 22435.0L1029.3 72.8M85.5 -42.6L1161.9 116.2M16485.6 22435.0L1037.1 73.9M88.2 -43.4L1159.6 113.8M16962.7 22435.0L1044.9 75.0M90.8 -44.2L1157.4 111.4M17916.9 22435.0L1060.8 77.2M95.9 -45.8L1153.1 106.8M18393.9 22435.0L1068.8 78.3M98.5 -46.5L1150.9 104.5M18871.0 22435.0L1076.8 79.4M101.0 -47.3L1148.8 102.3M19348.1 22435.0L1084.9 80.5M103.6 -48.1L1146.7 100.1M19825.2 22435.0L1093.1 81.6M106.1 -48.9L1144.7 97.9M20302.2 22435.0L1101.3 82.8M108.5 -49.6L1142.6 95.7M20779.3 22435.0L1109.6 83.9M111.0 -50.4L1140.6 93.6M21256.4 22435.0L1117.9 85.0M113.5 -51.1L1138.6 91.5M21733.5 22435.0L1126.3 86.2M115.9 -51.9L1136.7 89.4" stroke="#999999" stroke-width="1" fill="none"/><path d="M-1493.0 441.6L118.3 -52.6M-1493.0 441.6L-4100.6 22435.0M-1499.0 492.1L149.4 -48.3M-1251.5 367.5L4274.9 22435.0M-1505.9 550.4L181.9 -43.9M-1056.0 307.5L12650.5 22435.0M-1513.9 618.4L215.7 -39.2M-894.5 258.0L21026.0 22435.0M-1523.5 699.0L251.0 -34.3M-758.7 216.4L5843.0 5079.7M-1534.9 795.6L287.8 -29.3M-643.1 180.9L3469.5 2563.0M-1549.0 913.9L326.3 -24.0M-543.4 150.3L2616.0 1658.1M-1566.5 1062.0L366.6 -18.4M-456.5 123.7L2176.6 1192.1M-1589.1 1252.7L408.9 -12.6M-380.2 100.3L1908.7 908.1M-1619.3 1507.5L453.2 -6.5M-312.5 79.5L1728.3 716.8M-1661.8 1865.2L499.7 -0.1M-252.2 61.0L1598.6 579.3M-1725.7 2404.1L548.5 6.6M-198.1 44.4L1500.8 475.6M-1832.9 3308.6L600.0 13.7M-149.2 29.4L1424.5 394.6M-2050.2 5141.2L654.2 21.2M-104.9 15.8L1363.2 329.6M-2725.4 10836.3L711.4 29.1M-64.5 3.5L1313.0 276.4M-1643.2 22435.0L771.9 37.4M-27.6 -7.9L1271.0 231.9M3127.5 22435.0L835.9 46.2M6.4 -18.3L1235.4 194.2M7898.3 22435.0L903.9 55.6M37.6 -27.9L1204.9 161.8M12669.0 22435.0L976.0 65.5M66.6 -36.7L1178.4 133.7M17439.8 22435.0L1052.8 76.1M93.4 -45.0L1155.2 109.1M22210.5 22435.0L1134.7 87.4M118.3 -52.6L1134.7 87.4" stroke="#8c8c8c" stroke-width="1" fill="none"/></svg>
<svg style="left:591px;top:123px;overflow:hidden" width="524" height="410"><path d="M51.0 18.0L262.0 114.6L524.0 235.0M0.0 128.0L181.0 0.0M0.0 56.3L235.0 111.9L416.6 154.6M0.0 103.4L280.0 174.1L415.5 205.0L524.0 235.7M0.0 122.8L203.7 180.5M204.7 0.0L206.7 35.0L208.4 69.6L524.0 137.2M245.5 0.0L247.5 209.0L249.0 410.0M255.4 0.0L255.9 199.0L309.0 213.4L524.0 271.8M265.0 24.6L265.0 53.8M262.4 128.0L262.4 198.2L309.0 215.0L524.0 274.4M274.5 0.0L273.7 195.0L309.0 204.0L524.0 262.4M279.4 0.0L279.4 11.5L278.4 11.5L277.9 202.3M283.3 0.0L282.6 82.6L281.2 168.9L309.0 177.3L524.0 234.0M305.6 0.0L304.5 60.6L302.4 174.1M431.9 0.0L411.4 205.0L409.4 237.8M239.2 201.3L290.9 158.4M266.4 191.9L524.0 24.6M247.0 124.0L262.0 128.0L524.0 191.4M247.5 185.6L325.0 191.9M47.0 217.0L49.0 223.4L262.0 295.1L518.9 383.1L524.0 356.5M175.0 226.5L262.0 241.8L299.9 249.0M198.6 273.6L262.0 259.2L323.4 243.9M278.4 273.6L299.9 249.0M161.7 261.9L129.4 288.5L186.3 344.6M0.0 298.1L262.0 404.6L274.3 410.0M0.0 406.6L8.2 410.0M446.2 410.0L524.0 389.2" stroke="#000" stroke-width="1.1" fill="none"/><path d="M250.7 0.0C253.3 4.3 261.2 15.6 266.4 26.1C271.6 36.5 276.8 49.2 282.0 62.7C287.2 76.2 294.0 95.8 297.7 107.0C301.4 118.2 302.2 122.0 304.0 130.2C305.8 138.4 307.7 147.9 308.7 156.4C309.8 164.9 310.3 172.6 310.3 181.4C310.3 190.2 309.4 203.0 308.7 209.0C308.0 215.0 307.7 210.5 306.0 217.3C304.3 224.1 302.7 240.1 298.8 250.0C294.9 259.9 288.6 268.1 282.5 276.6C276.4 285.1 271.6 293.0 262.0 301.2C252.5 309.4 237.8 318.6 225.2 325.8C212.6 333.0 199.9 339.7 186.3 344.6C172.6 349.6 162.4 352.5 143.3 355.5C124.2 358.5 95.5 361.6 71.6 362.6C47.7 363.6 11.9 361.8 0.0 361.6M34.4 325.8C36.5 332.3 40.9 350.7 47.1 364.7C53.3 378.7 67.5 402.4 71.6 410.0" stroke="#000" stroke-width="1.1" fill="none"/><path d="M262 0 V128" stroke="#000" stroke-width="2"/><path d="M273.70000000000005 102 V127" stroke="#000" stroke-width="2"/><path d="M273.70000000000005 178.3 L309 188.5 L524 246.10000000000002" stroke="#000" stroke-width="1.8" fill="none"/><path d="M277.9 202.3 L309 211.7 L524 266.7" stroke="#000" stroke-width="1.8" fill="none"/><path d="M261.20000000000005 206.39999999999998 L524 280.4" stroke="#a04848" stroke-width="2" fill="none"/><path d="M262 205 L499.5 0" stroke="#4ba04b" stroke-width="1.3" fill="none"/><path d="M265.29999999999995 0 V24.599999999999994 M264.79999999999995 53.80000000000001 V202.3 L309 216 L524 276.1" stroke="#ff0000" stroke-width="1.1" fill="none"/><path d="M36.39999999999998 348.3 V373.9 L61.39999999999998 381 M36.39999999999998 373.9 L51.200000000000045 360.6" stroke="#686868" stroke-width="1" fill="none"/></svg>
<div style="position:absolute;left:630px;top:463px;font-family:'Liberation Sans', sans-serif;font-size:12px;font-weight:bold;font-style:normal;color:#646464;white-space:pre;line-height:1;letter-spacing:0.000px;">z</div>
<div style="position:absolute;left:644px;top:476px;font-family:'Liberation Sans', sans-serif;font-size:12px;font-weight:bold;font-style:normal;color:#646464;white-space:pre;line-height:1;letter-spacing:0.000px;">y</div>
<div style="position:absolute;left:656px;top:494px;font-family:'Liberation Sans', sans-serif;font-size:12px;font-weight:bold;font-style:normal;color:#646464;white-space:pre;line-height:1;letter-spacing:0.000px;">x</div>
<div style="position:absolute;left:61px;top:123px;width:40px;height:18px;background:#6a9fd8;"></div>
<div style="position:absolute;left:69px;top:124px;font-family:'Liberation Sans', sans-serif;font-size:14px;font-weight:bold;font-style:normal;color:#fff;white-space:pre;line-height:1;letter-spacing:0.000px;">Top</div>
<div style="position:absolute;left:591px;top:123px;width:92px;height:18px;background:#6a9fd8;"></div>
<div style="position:absolute;left:597px;top:124px;font-family:'Liberation Sans', sans-serif;font-size:14px;font-weight:bold;font-style:normal;color:#fff;white-space:pre;line-height:1;letter-spacing:0.000px;">Perspective</div>
<div style="position:absolute;left:61px;top:539px;width:48px;height:18px;background:#3162ad;"></div>
<div style="position:absolute;left:68px;top:540px;font-family:'Liberation Sans', sans-serif;font-size:13.5px;font-weight:bold;font-style:normal;color:#fff;white-space:pre;line-height:1;letter-spacing:0.000px;">Front</div>
<div style="position:absolute;left:591px;top:539px;width:48px;height:18px;background:#6a9fd8;"></div>
<div style="position:absolute;left:597px;top:540px;font-family:'Liberation Sans', sans-serif;font-size:14px;font-weight:bold;font-style:normal;color:#fff;white-space:pre;line-height:1;letter-spacing:0.000px;">Right</div>
<div style="position:absolute;left:1116px;top:120px;width:164px;height:830px;background:#ebe9ed;"></div>
<div style="position:absolute;left:1118px;top:120px;width:162px;height:1px;background:#a8a8b0;"></div>
<div style="position:absolute;left:1118px;top:121px;width:162px;height:829px;background:linear-gradient(to right,#fbfdfd,#eef5f7 8px,#eef5f7);"></div>
<div style="position:absolute;left:1118px;top:121px;width:162px;height:18px;background:linear-gradient(to right,#f4f8fa 0px,#eaf2f6 90px,#dce8f0 110px,#c8d8ea 160px);"></div>
<div style="position:absolute;left:1128px;top:127px;font-family:'Liberation Sans', sans-serif;font-size:11px;font-weight:normal;font-style:normal;color:#000;white-space:pre;line-height:1;letter-spacing:-0.056px;">Layers - All Layers</div>
<div style="position:absolute;left:1225px;top:131px;width:2px;height:2px;background:#b8bcc8;"></div>
<div style="position:absolute;left:1229px;top:131px;width:2px;height:2px;background:#b8bcc8;"></div>
<div style="position:absolute;left:1233px;top:131px;width:2px;height:2px;background:#b8bcc8;"></div>
<div style="position:absolute;left:1237px;top:131px;width:2px;height:2px;background:#b8bcc8;"></div>
<div style="position:absolute;left:1241px;top:131px;width:2px;height:2px;background:#b8bcc8;"></div>
<div style="position:absolute;left:1245px;top:131px;width:2px;height:2px;background:#b8bcc8;"></div>
<div style="position:absolute;left:1249px;top:131px;width:2px;height:2px;background:#b8bcc8;"></div>
<div style="position:absolute;left:1253px;top:131px;width:2px;height:2px;background:#b8bcc8;"></div>
<div style="position:absolute;left:1257px;top:131px;width:2px;height:2px;background:#b8bcc8;"></div>
<div style="position:absolute;left:1261px;top:131px;width:2px;height:2px;background:#b8bcc8;"></div>
<div style="position:absolute;left:1266px;top:124px;width:13px;height:13px;background:linear-gradient(to bottom,#8ab0f0,#3c6ed8);border:1px solid #fff;border-radius:2px;"></div>
<svg style="left:1266px;top:124px" width="13" height="13"><path d="M3.5 3.5 L9.5 9.5 M9.5 3.5 L3.5 9.5" stroke="#fff" stroke-width="1.8"/></svg>
<div style="position:absolute;left:1126px;top:139px;width:154px;height:24px;background:#ebe9ed;"></div>
<svg style="left:0;top:0" width="1280" height="170"><path d="M1132.5 143.5 H1137 L1140.5 147 V155.5 H1132.5 Z M1137 143.5 V147 H1140.5" fill="#fff" stroke="#000" stroke-width="1"/><path d="M1152.5 143.5 H1157 L1159 145.5 V151.5 H1152.5 Z M1156.5 148.5 H1160 L1162.5 151 V155.5 H1156.5 Z" fill="#fff" stroke="#000" stroke-width="1"/><path d="M1174 146 L1181 153 M1181 146 L1174 153" stroke="#808080" stroke-width="1.2"/><path d="M1194 153 L1198.5 148 L1203 153 Z" fill="#000"/><path d="M1215 149 L1219.5 154 L1224 149 Z" fill="#000"/><path d="M1243 146 L1238.5 150.5 L1243 155 Z" fill="#909090"/><path d="M1257.5 146.5 H1266.5 L1263 151 V155.5 H1261 V151 Z" fill="#fff" stroke="#000" stroke-width="1.1"/><path d="M1277 152 L1280 149" stroke="#000" stroke-width="1.2"/></svg>
<div style="position:absolute;left:1126px;top:163px;width:154px;height:787px;background:#fff;"></div>
<div style="position:absolute;left:1126px;top:163px;width:154px;height:1px;background:#a8a8b0;"></div>
<div style="position:absolute;left:1126px;top:163px;width:1px;height:787px;background:#a8a8b0;"></div>
<div style="position:absolute;left:1127px;top:184px;width:150px;height:1px;background:#e0e0e0;"></div>
<div style="position:absolute;left:1207px;top:166px;width:1px;height:17px;background:#e4e4e4;"></div>
<div style="position:absolute;left:1224px;top:166px;width:1px;height:17px;background:#e4e4e4;"></div>
<div style="position:absolute;left:1241px;top:166px;width:1px;height:17px;background:#e4e4e4;"></div>
<div style="position:absolute;left:1258px;top:166px;width:1px;height:17px;background:#e4e4e4;"></div>
<div style="position:absolute;left:1275px;top:166px;width:1px;height:17px;background:#e4e4e4;"></div>
<div style="position:absolute;left:1134px;top:170px;font-family:'Liberation Sans', sans-serif;font-size:11px;font-weight:normal;font-style:normal;color:#000;white-space:pre;line-height:1;letter-spacing:0.000px;">Name</div>
<div style="position:absolute;left:1149px;top:188px;font-family:'Liberation Sans', sans-serif;font-size:10.5px;font-weight:normal;font-style:normal;color:#000;white-space:pre;line-height:1;letter-spacing:0.000px;">1</div>
<div style="position:absolute;left:1128px;top:199px;width:149px;height:1px;background:repeating-linear-gradient(to right,#d8d8d8 0px,#d8d8d8 1px,transparent 1px,transparent 2px);"></div>
<div style="position:absolute;left:1128px;top:200px;width:149px;height:15px;background:#3a62b0;"></div>
<div style="position:absolute;left:1150px;top:203px;font-family:'Liberation Sans', sans-serif;font-size:11.5px;font-weight:bold;font-style:normal;color:#fff;white-space:pre;line-height:1;letter-spacing:1.000px;">11</div>
<div style="position:absolute;left:1134px;top:203px;width:10px;height:10px;background:linear-gradient(to bottom,#fff,#d8d0c0);border:1px solid #a0a0a0;"></div>
<div style="position:absolute;left:1136px;top:207px;width:6px;height:2px;background:#000;"></div>
<div style="position:absolute;left:1128px;top:214px;width:149px;height:1px;background:repeating-linear-gradient(to right,#d8d8d8 0px,#d8d8d8 1px,transparent 1px,transparent 2px);"></div>
<div style="position:absolute;left:1163px;top:218px;font-family:'Liberation Sans', sans-serif;font-size:11px;font-weight:normal;font-style:normal;color:#000;white-space:pre;line-height:1;letter-spacing:0.000px;">Layer 07</div>
<div style="position:absolute;left:1128px;top:229px;width:149px;height:1px;background:repeating-linear-gradient(to right,#d8d8d8 0px,#d8d8d8 1px,transparent 1px,transparent 2px);"></div>
<div style="position:absolute;left:1149px;top:233px;font-family:'Liberation Sans', sans-serif;font-size:11px;font-weight:normal;font-style:normal;color:#000;white-space:pre;line-height:1;letter-spacing:0.000px;">Layer 02</div>
<div style="position:absolute;left:1128px;top:244px;width:149px;height:1px;background:repeating-linear-gradient(to right,#d8d8d8 0px,#d8d8d8 1px,transparent 1px,transparent 2px);"></div>
<div style="position:absolute;left:1149px;top:248px;font-family:'Liberation Sans', sans-serif;font-size:11px;font-weight:normal;font-style:normal;color:#000;white-space:pre;line-height:1;letter-spacing:0.000px;">Layer 03</div>
<div style="position:absolute;left:1128px;top:259px;width:149px;height:1px;background:repeating-linear-gradient(to right,#d8d8d8 0px,#d8d8d8 1px,transparent 1px,transparent 2px);"></div>
<div style="position:absolute;left:1149px;top:263px;font-family:'Liberation Sans', sans-serif;font-size:10.5px;font-weight:normal;font-style:normal;color:#000;white-space:pre;line-height:1;letter-spacing:0.143px;">Layer 04</div>
<div style="position:absolute;left:1128px;top:274px;width:149px;height:1px;background:repeating-linear-gradient(to right,#d8d8d8 0px,#d8d8d8 1px,transparent 1px,transparent 2px);"></div>
<div style="position:absolute;left:1149px;top:278px;font-family:'Liberation Sans', sans-serif;font-size:11px;font-weight:normal;font-style:normal;color:#000;white-space:pre;line-height:1;letter-spacing:0.000px;">Layer 05</div>
<div style="position:absolute;left:1128px;top:289px;width:149px;height:1px;background:repeating-linear-gradient(to right,#d8d8d8 0px,#d8d8d8 1px,transparent 1px,transparent 2px);"></div>
<div style="position:absolute;left:1149px;top:293px;font-family:'Liberation Sans', sans-serif;font-size:10.5px;font-weight:normal;font-style:normal;color:#000;white-space:pre;line-height:1;letter-spacing:0.143px;">Layer 01</div>
<div style="position:absolute;left:1128px;top:304px;width:149px;height:1px;background:repeating-linear-gradient(to right,#d8d8d8 0px,#d8d8d8 1px,transparent 1px,transparent 2px);"></div>
<svg style="left:0;top:0" width="1280" height="320"><path d="M1232 196 C1232 194 1228.5 193 1228.5 190.5 C1228.5 188 1230 187 1232 187 C1234 187 1235.5 188 1235.5 190.5 C1235.5 193 1232 194 1232 196 Z" fill="#f8f890" stroke="#404000" stroke-width="0.9"/><path d="M1230.5 195.5 H1233.5 V198 H1230.5 Z" fill="#303030"/><rect x="1245.5" y="192.5" width="6" height="5" fill="#fff" stroke="#000" stroke-width="1"/><path d="M1250.5 192 V189.5 C1250.5 187 1255.5 187 1255.5 189.5 V191" stroke="#000" stroke-width="1" fill="none"/><rect x="1261.5" y="187.5" width="9" height="9" fill="#ff0000" stroke="#000" stroke-width="1"/><path d="M1211 208 L1214.5 212.5 L1221 204" stroke="#fff" stroke-width="3.4" fill="none" stroke-linecap="round"/><path d="M1211 208 L1214.5 212.5 L1221 204" stroke="#000" stroke-width="1.9" fill="none"/><rect x="1261.5" y="202.5" width="9" height="9" fill="#000" stroke="#fff" stroke-width="1"/><path d="M1232 226 C1232 224 1228.5 223 1228.5 220.5 C1228.5 218 1230 217 1232 217 C1234 217 1235.5 218 1235.5 220.5 C1235.5 223 1232 224 1232 226 Z" fill="#f8f890" stroke="#404000" stroke-width="0.9"/><path d="M1230.5 225.5 H1233.5 V228 H1230.5 Z" fill="#303030"/><rect x="1245.5" y="222.5" width="6" height="5" fill="#fff" stroke="#000" stroke-width="1"/><path d="M1250.5 222 V219.5 C1250.5 217 1255.5 217 1255.5 219.5 V221" stroke="#000" stroke-width="1" fill="none"/><rect x="1261.5" y="217.5" width="9" height="9" fill="#000000" stroke="#000" stroke-width="1"/><path d="M1232 241 C1232 239 1228.5 238 1228.5 235.5 C1228.5 233 1230 232 1232 232 C1234 232 1235.5 233 1235.5 235.5 C1235.5 238 1232 239 1232 241 Z" fill="#f8f890" stroke="#404000" stroke-width="0.9"/><path d="M1230.5 240.5 H1233.5 V243 H1230.5 Z" fill="#303030"/><rect x="1245.5" y="237.5" width="6" height="5" fill="#fff" stroke="#000" stroke-width="1"/><path d="M1250.5 237 V234.5 C1250.5 232 1255.5 232 1255.5 234.5 V236" stroke="#000" stroke-width="1" fill="none"/><rect x="1261.5" y="232.5" width="9" height="9" fill="#8030c8" stroke="#000" stroke-width="1"/><path d="M1232 256 C1232 254 1228.5 253 1228.5 250.5 C1228.5 248 1230 247 1232 247 C1234 247 1235.5 248 1235.5 250.5 C1235.5 253 1232 254 1232 256 Z" fill="#f8f890" stroke="#404000" stroke-width="0.9"/><path d="M1230.5 255.5 H1233.5 V258 H1230.5 Z" fill="#303030"/><rect x="1245.5" y="252.5" width="6" height="5" fill="#fff" stroke="#000" stroke-width="1"/><path d="M1250.5 252 V249.5 C1250.5 247 1255.5 247 1255.5 249.5 V251" stroke="#000" stroke-width="1" fill="none"/><rect x="1261.5" y="247.5" width="9" height="9" fill="#0000ff" stroke="#000" stroke-width="1"/><path d="M1232 271 C1232 269 1228.5 268 1228.5 265.5 C1228.5 263 1230 262 1232 262 C1234 262 1235.5 263 1235.5 265.5 C1235.5 268 1232 269 1232 271 Z" fill="#f8f890" stroke="#404000" stroke-width="0.9"/><path d="M1230.5 270.5 H1233.5 V273 H1230.5 Z" fill="#303030"/><rect x="1245.5" y="267.5" width="6" height="5" fill="#fff" stroke="#000" stroke-width="1"/><path d="M1250.5 267 V264.5 C1250.5 262 1255.5 262 1255.5 264.5 V266" stroke="#000" stroke-width="1" fill="none"/><rect x="1261.5" y="262.5" width="9" height="9" fill="#007800" stroke="#000" stroke-width="1"/><path d="M1232 286 C1232 284 1228.5 283 1228.5 280.5 C1228.5 278 1230 277 1232 277 C1234 277 1235.5 278 1235.5 280.5 C1235.5 283 1232 284 1232 286 Z" fill="#f8f890" stroke="#404000" stroke-width="0.9"/><path d="M1230.5 285.5 H1233.5 V288 H1230.5 Z" fill="#303030"/><rect x="1245.5" y="282.5" width="6" height="5" fill="#fff" stroke="#000" stroke-width="1"/><path d="M1250.5 282 V279.5 C1250.5 277 1255.5 277 1255.5 279.5 V281" stroke="#000" stroke-width="1" fill="none"/><rect x="1261.5" y="277.5" width="9" height="9" fill="#ffffff" stroke="#000" stroke-width="1"/><path d="M1232 301 C1232 299 1228.5 298 1228.5 295.5 C1228.5 293 1230 292 1232 292 C1234 292 1235.5 293 1235.5 295.5 C1235.5 298 1232 299 1232 301 Z" fill="#f8f890" stroke="#404000" stroke-width="0.9"/><path d="M1230.5 300.5 H1233.5 V303 H1230.5 Z" fill="#303030"/><rect x="1245.5" y="297.5" width="6" height="5" fill="#fff" stroke="#000" stroke-width="1"/><path d="M1250.5 297 V294.5 C1250.5 292 1255.5 292 1255.5 294.5 V296" stroke="#000" stroke-width="1" fill="none"/><rect x="1261.5" y="292.5" width="9" height="9" fill="#000000" stroke="#000" stroke-width="1"/></svg>
<div style="position:absolute;left:1127px;top:930px;width:150px;height:16px;background:linear-gradient(to bottom,#f4f8fe,#e4ecf8);"></div>
<div style="position:absolute;left:1128px;top:931px;width:16px;height:15px;background:linear-gradient(to bottom,#e8f0fc,#c4d4ee);border:1px solid #a0b4d4;border-radius:2px;"></div>
<div style="position:absolute;left:1146px;top:931px;width:40px;height:15px;background:linear-gradient(to bottom,#e8f0fc,#c4d4ee);border:1px solid #a0b4d4;border-radius:2px;"></div>
<div style="position:absolute;left:1261px;top:931px;width:16px;height:15px;background:linear-gradient(to bottom,#e8f0fc,#c4d4ee);border:1px solid #a0b4d4;border-radius:2px;"></div>
<svg style="left:0;top:0" width="1280" height="960"><path d="M1137.5 935 L1134 938.5 L1137.5 942 M1267 935 L1270.5 938.5 L1267 942" stroke="#4a5060" stroke-width="1.6" fill="none"/><path d="M1163.5 935 V942 M1165.5 935 V942 M1167.5 935 V942 M1169.5 935 V942" stroke="#a0b0c8" stroke-width="1"/></svg>
<div style="position:absolute;left:1278px;top:163px;width:2px;height:787px;background:#ebe9ed;"></div>
<div style="position:absolute;left:1126px;top:947px;width:152px;height:1px;background:#a8a8b0;"></div>
<div style="position:absolute;left:0px;top:949px;width:1280px;height:1px;background:#fff;"></div>
<div style="position:absolute;left:0px;top:950px;width:1280px;height:2px;background:#f0f3f8;"></div>
<div style="position:absolute;left:0px;top:952px;width:1280px;height:21px;background:#ebe9ed;"></div>
<div style="position:absolute;left:0px;top:952px;width:7px;height:21px;background:linear-gradient(to right,#dbe4f0,#c0cfe2);"></div>
<div style="position:absolute;left:5px;top:957px;width:1px;height:1px;background:#98a0b0;"></div>
<div style="position:absolute;left:6px;top:958px;width:1px;height:1px;background:#fff;"></div>
<div style="position:absolute;left:5px;top:961px;width:1px;height:1px;background:#98a0b0;"></div>
<div style="position:absolute;left:6px;top:962px;width:1px;height:1px;background:#fff;"></div>
<div style="position:absolute;left:5px;top:965px;width:1px;height:1px;background:#98a0b0;"></div>
<div style="position:absolute;left:6px;top:966px;width:1px;height:1px;background:#fff;"></div>
<div style="position:absolute;left:715px;top:952px;width:1px;height:21px;background:#b0b0b4;"></div>
<div style="position:absolute;left:0px;top:972px;width:1280px;height:1px;background:#a8a8ac;"></div>
<div style="position:absolute;left:0px;top:973px;width:1280px;height:1px;background:#fff;"></div>
<div style="position:absolute;left:10px;top:956px;width:13px;height:13px;background:linear-gradient(135deg,#dcdcd4,#f8f8f4);border:1px solid #1c5180;"></div>
<svg style="left:10px;top:956px" width="13" height="13"><path d="M3 6 L5.5 8.5 L10 3.5" stroke="#21a121" stroke-width="2" fill="none"/></svg>
<div style="position:absolute;left:27px;top:958px;font-family:'Liberation Sans', sans-serif;font-size:11.5px;font-weight:normal;font-style:normal;color:#000;white-space:pre;line-height:1;letter-spacing:0.000px;">End</div>
<div style="position:absolute;left:243px;top:958px;font-family:'Liberation Sans', sans-serif;font-size:11px;font-weight:normal;font-style:normal;color:#000;white-space:pre;line-height:1;letter-spacing:0.000px;">Cen</div>
<div style="position:absolute;left:280px;top:956px;width:13px;height:13px;background:linear-gradient(135deg,#dcdcd4,#f8f8f4);border:1px solid #1c5180;"></div>
<svg style="left:280px;top:956px" width="13" height="13"><path d="M3 6 L5.5 8.5 L10 3.5" stroke="#21a121" stroke-width="2" fill="none"/></svg>
<div style="position:absolute;left:297px;top:958px;font-family:'Liberation Sans', sans-serif;font-size:11.5px;font-weight:normal;font-style:normal;color:#000;white-space:pre;line-height:1;letter-spacing:0.000px;">Int</div>
<div style="position:absolute;left:334px;top:956px;width:13px;height:13px;background:linear-gradient(135deg,#dcdcd4,#f8f8f4);border:1px solid #1c5180;"></div>
<div style="position:absolute;left:351px;top:958px;font-family:'Liberation Sans', sans-serif;font-size:11px;font-weight:normal;font-style:normal;color:#000;white-space:pre;line-height:1;letter-spacing:0.000px;">Perp</div>
<div style="position:absolute;left:388px;top:956px;width:13px;height:13px;background:linear-gradient(135deg,#dcdcd4,#f8f8f4);border:1px solid #1c5180;"></div>
<div style="position:absolute;left:406px;top:958px;font-family:'Liberation Sans', sans-serif;font-size:11.5px;font-weight:normal;font-style:normal;color:#000;white-space:pre;line-height:1;letter-spacing:0.500px;">Tan</div>
<div style="position:absolute;left:442px;top:956px;width:13px;height:13px;background:linear-gradient(135deg,#dcdcd4,#f8f8f4);border:1px solid #1c5180;"></div>
<svg style="left:442px;top:956px" width="13" height="13"><path d="M3 6 L5.5 8.5 L10 3.5" stroke="#21a121" stroke-width="2" fill="none"/></svg>
<div style="position:absolute;left:458px;top:958px;font-family:'Liberation Sans', sans-serif;font-size:11.5px;font-weight:normal;font-style:normal;color:#000;white-space:pre;line-height:1;letter-spacing:0.000px;">Quad</div>
<div style="position:absolute;left:496px;top:956px;width:13px;height:13px;background:linear-gradient(135deg,#dcdcd4,#f8f8f4);border:1px solid #1c5180;"></div>
<div style="position:absolute;left:512px;top:958px;font-family:'Liberation Sans', sans-serif;font-size:11.5px;font-weight:normal;font-style:normal;color:#000;white-space:pre;line-height:1;letter-spacing:0.000px;">Knot</div>
<div style="position:absolute;left:550px;top:956px;width:13px;height:13px;background:linear-gradient(to bottom,#f8fbff,#b8c8e0);border:1px solid #7088b0;border-radius:3px;"></div>
<div style="position:absolute;left:567px;top:958px;font-family:'Liberation Sans', sans-serif;font-size:11px;font-weight:normal;font-style:normal;color:#000;white-space:pre;line-height:1;letter-spacing:0.000px;">Project</div>
<div style="position:absolute;left:604px;top:956px;width:13px;height:13px;background:#0a3c82;border:1px solid #6080b0;border-radius:3px;box-shadow:inset 0 0 0 1px #a8c0e0;"></div>
<div style="position:absolute;left:620px;top:958px;font-family:'Liberation Sans', sans-serif;font-size:11.5px;font-weight:normal;font-style:normal;color:#000;white-space:pre;line-height:1;letter-spacing:0.000px;">STrack</div>
<div style="position:absolute;left:658px;top:956px;width:13px;height:13px;background:linear-gradient(to bottom,#f8fbff,#b8c8e0);border:1px solid #7088b0;border-radius:3px;"></div>
<div style="position:absolute;left:674px;top:958px;font-family:'Liberation Sans', sans-serif;font-size:11px;font-weight:normal;font-style:normal;color:#000;white-space:pre;line-height:1;letter-spacing:0.167px;">Disable</div>
<div style="position:absolute;left:0px;top:974px;width:1280px;height:20px;background:#eef0f5;"></div>
<div style="position:absolute;left:1px;top:980px;font-family:'Liberation Sans', sans-serif;font-size:11px;font-weight:normal;font-style:normal;color:#000;white-space:pre;line-height:1;letter-spacing:0.000px;">Maximize the</div>
<div style="position:absolute;left:0px;top:994px;width:1280px;height:30px;background:linear-gradient(to bottom,#2848b0 0px,#2848b0 1px,#90ccf4 1px,#80bcee 4px,#6ca8e6 10px,#5e9ade 15.5px,#3a7cd2 16.5px,#3468c4 22px,#2e5ab8 27px,#2a4ca8 30px);"></div>
<div style="position:absolute;left:0px;top:994px;width:88px;height:30px;background:linear-gradient(to bottom,#3c9c3c 0px,#58b858 3px,#48a848 12px,#1a901a 15px,#10a010 22px,#18c818 30px);border-radius:0 14px 14px 0;"></div>
<svg style="left:10px;top:1000px" width="16" height="16"><path d="M1 2 C3 1 5 1 7 2 L6 7 C4 6 2 6 0 7 Z" fill="#f05020"/><path d="M8 2 C10 3 12 3 15 2 L14 7 C11 8 9 8 7 7 Z" fill="#60c020"/><path d="M0 8 C2 7 4 7 6 8 L5 13 C3 12 1 12 -1 13 Z" fill="#2080f0"/><path d="M7 8 C9 9 11 9 14 8 L13 13 C10 14 8 14 6 13 Z" fill="#f8c800"/></svg>
<div style="position:absolute;left:25px;top:1000px;font-family:'Liberation Sans', sans-serif;font-size:17px;font-weight:bold;font-style:normal;color:#fff;white-space:pre;line-height:1;letter-spacing:0.333px;text-shadow:1px 1px 1px #204020;">пуск</div>
<svg style="left:0;top:0" width="1280" height="1024"><rect x="99.5" y="1003.5" width="15" height="12" fill="#3870d8" stroke="#c0c8d8" stroke-width="1"/><rect x="100" y="1012" width="14" height="3" fill="#303030"/><circle cx="102" cy="1013" r="1.5" fill="#f0c020"/><rect x="122" y="1000" width="15" height="16" fill="#0a10d0"/><rect x="124" y="1008" width="11" height="7" fill="#fff"/><path d="M124 1010 H135 M124 1012.5 H135" stroke="#e02020" stroke-width="1.3"/><rect x="126" y="1000" width="6" height="4" fill="#c0c0c0"/><g transform="translate(145,1000)"><path d="M2.6 8.8 H13.4 A5.4 5.4 0 1 0 12.2 12.6" stroke="#0838a0" stroke-width="4.4" fill="none"/><path d="M2.6 8.8 H13.4 A5.4 5.4 0 1 0 12.2 12.6" stroke="#3aa0f4" stroke-width="2.4" fill="none"/><ellipse cx="8" cy="8.5" rx="8.3" ry="4.2" fill="none" stroke="#e8a818" stroke-width="1.6" transform="rotate(-38 8 8.5)"/></g><path d="M173 1001 L176 1003.5 L173 1006 M177 1001 L180 1003.5 L177 1006" stroke="#fff" stroke-width="1.4" fill="none"/></svg>
<div style="position:absolute;left:191px;top:996px;width:1px;height:28px;background:#1a3c98;"></div>
<div style="position:absolute;left:192px;top:996px;width:1px;height:28px;background:#5a90e8;"></div>
<div style="position:absolute;left:191px;top:998px;width:135px;height:24px;background:linear-gradient(to bottom,#8cc8f0 0px,#72b0ea 5px,#629ee2 11px,#3a7cd2 12px,#3468c4 18px,#2e58b8 22px,#003478 22px);border:1px solid #5a78c0;border-bottom:none;border-radius:3px 3px 0 0;"></div>
<svg style="left:201px;top:1002px" width="16" height="16"><path d="M2.6 8.8 H13.4 A5.4 5.4 0 1 0 12.2 12.6" stroke="#0838a0" stroke-width="4.4" fill="none"/><path d="M2.6 8.8 H13.4 A5.4 5.4 0 1 0 12.2 12.6" stroke="#3aa0f4" stroke-width="2.4" fill="none"/><ellipse cx="8" cy="8.5" rx="8.3" ry="4.2" fill="none" stroke="#e8a818" stroke-width="1.6" transform="rotate(-38 8 8.5)"/></svg>
<div style="position:absolute;left:221px;top:1005px;font-family:'Liberation Sans', sans-serif;font-size:11.5px;font-weight:normal;font-style:normal;color:#fff;white-space:pre;line-height:1;letter-spacing:-0.067px;">Выполнено: 97...</div>
<div style="position:absolute;left:328px;top:998px;width:135px;height:24px;background:linear-gradient(to bottom,#8cc8f0 0px,#72b0ea 5px,#629ee2 11px,#3a7cd2 12px,#3468c4 18px,#2e58b8 22px,#003478 22px);border:1px solid #5a78c0;border-bottom:none;border-radius:3px 3px 0 0;"></div>
<svg style="left:339px;top:1001px" width="16" height="18"><path d="M2 1 L8 4 V17 L2 14 Z" fill="#f0d060" stroke="#a08020" stroke-width="0.6"/><path d="M8 4 L13 2 V15 L8 17 Z" fill="#e8c040"/></svg>
<div style="position:absolute;left:358px;top:1005px;font-family:'Liberation Sans', sans-serif;font-size:10.5px;font-weight:normal;font-style:normal;color:#fff;white-space:pre;line-height:1;letter-spacing:0.000px;">рино всё о нем</div>
<div style="position:absolute;left:465px;top:998px;width:135px;height:24px;background:linear-gradient(to bottom,#8cc8f0 0px,#72b0ea 5px,#629ee2 11px,#3a7cd2 12px,#3468c4 18px,#2e58b8 22px,#003478 22px);border:1px solid #5a78c0;border-bottom:none;border-radius:3px 3px 0 0;"></div>
<svg style="left:475px;top:1002px" width="16" height="16"><path d="M2.6 8.8 H13.4 A5.4 5.4 0 1 0 12.2 12.6" stroke="#0838a0" stroke-width="4.4" fill="none"/><path d="M2.6 8.8 H13.4 A5.4 5.4 0 1 0 12.2 12.6" stroke="#3aa0f4" stroke-width="2.4" fill="none"/><ellipse cx="8" cy="8.5" rx="8.3" ry="4.2" fill="none" stroke="#e8a818" stroke-width="1.6" transform="rotate(-38 8 8.5)"/></svg>
<div style="position:absolute;left:495px;top:1005px;font-family:'Liberation Sans', sans-serif;font-size:10.5px;font-weight:normal;font-style:normal;color:#fff;white-space:pre;line-height:1;letter-spacing:0.118px;">Рино - ЧаВо для...</div>
<div style="position:absolute;left:602px;top:998px;width:135px;height:24px;background:linear-gradient(to bottom,#5270a8 0px,#3a5c9c 4px,#24508e 11px,#143a80 12px,#143a80 22px,#b8c0d0 23px);border:1px solid #000a48;border-bottom:none;border-radius:3px 3px 0 0;"></div>
<svg style="left:612px;top:1002px" width="16" height="16"><rect width="16" height="16" fill="#000"/><path d="M1 0 H5.5 L7 2.5 L9.5 4.5 L12.5 4.7 L11 6.5 L13.5 6 L15.5 4 L16 5.5 L13 8 L11 9.5 L10 11.5 L9.5 14 L8 13 L7 14 L5 12.5 L2 10 L1 8 Z" fill="#c8c8c8"/><path d="M2 1 L5 1 L6 3 L8 5" stroke="#f8f8f8" stroke-width="1.2" fill="none"/><path d="M6 8 L9 10 L8.5 12.5" stroke="#f0f0f0" stroke-width="1.5" fill="none"/><rect x="3" y="6" width="2" height="2" fill="#ff1010"/><rect x="5" y="8" width="1.5" height="1.5" fill="#1010c0"/><rect x="6.5" y="12" width="1.5" height="1.5" fill="#1010c0"/><rect x="11.5" y="12" width="1.5" height="1.5" fill="#1010c0"/><rect x="15" y="1" width="1.5" height="1.5" fill="#1010c0"/><rect x="12.5" y="9.5" width="1.5" height="1.5" fill="#c0c000"/><rect x="10.5" y="7.5" width="1.5" height="1.5" fill="#000"/></svg>
<div style="position:absolute;left:632px;top:1005px;font-family:'Liberation Sans', sans-serif;font-size:11px;font-weight:normal;font-style:normal;color:#fff;white-space:pre;line-height:1;letter-spacing:0.111px;">1 - Rhinoceros (...</div>
<div style="position:absolute;left:739px;top:998px;width:135px;height:24px;background:linear-gradient(to bottom,#8cc8f0 0px,#72b0ea 5px,#629ee2 11px,#3a7cd2 12px,#3468c4 18px,#2e58b8 22px,#003478 22px);border:1px solid #5a78c0;border-bottom:none;border-radius:3px 3px 0 0;"></div>
<svg style="left:749px;top:1002px" width="16" height="16"><rect x="0" y="0" width="16" height="5" fill="#e03030"/><rect x="0" y="5" width="16" height="6" fill="#3060d0"/><rect x="0" y="11" width="16" height="5" fill="#30a030"/><rect x="5" y="0" width="6" height="16" fill="#c09050"/><circle cx="8" cy="7" r="3" fill="none" stroke="#404040" stroke-width="1.2"/></svg>
<div style="position:absolute;left:769px;top:1005px;font-family:'Liberation Sans', sans-serif;font-size:11px;font-weight:normal;font-style:normal;color:#fff;white-space:pre;line-height:1;letter-spacing:0.067px;">фильм калиты ...</div>
<div style="position:absolute;left:876px;top:998px;width:135px;height:24px;background:linear-gradient(to bottom,#8cc8f0 0px,#72b0ea 5px,#629ee2 11px,#3a7cd2 12px,#3468c4 18px,#2e58b8 22px,#003478 22px);border:1px solid #5a78c0;border-bottom:none;border-radius:3px 3px 0 0;"></div>
<svg style="left:886px;top:1002px" width="16" height="16"><path d="M2.6 8.8 H13.4 A5.4 5.4 0 1 0 12.2 12.6" stroke="#0838a0" stroke-width="4.4" fill="none"/><path d="M2.6 8.8 H13.4 A5.4 5.4 0 1 0 12.2 12.6" stroke="#3aa0f4" stroke-width="2.4" fill="none"/><ellipse cx="8" cy="8.5" rx="8.3" ry="4.2" fill="none" stroke="#e8a818" stroke-width="1.6" transform="rotate(-38 8 8.5)"/></svg>
<div style="position:absolute;left:906px;top:1005px;font-family:'Liberation Sans', sans-serif;font-size:11px;font-weight:normal;font-style:normal;color:#fff;white-space:pre;line-height:1;letter-spacing:-0.059px;">Работа в Рино (...</div>
<div style="position:absolute;left:1024px;top:1001px;width:16px;height:15px;background:#3c6cc8;"></div>
<div style="position:absolute;left:1024px;top:1005px;font-family:'Liberation Sans', sans-serif;font-size:11px;font-weight:normal;font-style:normal;color:#fff;white-space:pre;line-height:1;letter-spacing:0.000px;">RU</div>
<div style="position:absolute;left:1061px;top:994px;width:219px;height:30px;background:linear-gradient(to bottom,#3c6080 0px,#3c6080 1px,#ffffff 1px,#eef4fe 3px,#d8e4f6 10px,#c8d6f0 15.5px,#a8c0e6 16.5px,#80a4da 22px,#5088d0 28px,#7898c8 30px);"></div>
<div style="position:absolute;left:1061px;top:995px;width:1px;height:29px;background:#90b0d8;"></div>
<svg style="left:0;top:0" width="1280" height="1024"><path d="M1073 1016 L1080 1002 L1087 1016 Z" fill="#f0d020" stroke="#206080" stroke-width="1.2"/><path d="M1069 1016 L1077 1004" stroke="#3070d0" stroke-width="2"/><rect x="1090" y="1001" width="16" height="16" fill="#000"/><g transform="translate(1090,1001)"><path d="M1 0 H5.5 L7 2.5 L9.5 4.5 L12.5 4.7 L11 6.5 L13.5 6 L15.5 4 L16 5.5 L13 8 L11 9.5 L10 11.5 L9.5 14 L8 13 L7 14 L5 12.5 L2 10 L1 8 Z" fill="#c8c8c8"/><path d="M2 1 L5 1 L6 3 L8 5" stroke="#f8f8f8" stroke-width="1.2" fill="none"/><path d="M6 8 L9 10 L8.5 12.5" stroke="#f0f0f0" stroke-width="1.5" fill="none"/><rect x="3" y="6" width="2" height="2" fill="#ff1010"/><rect x="5" y="8" width="1.5" height="1.5" fill="#1010c0"/><rect x="6.5" y="12" width="1.5" height="1.5" fill="#1010c0"/><rect x="11.5" y="12" width="1.5" height="1.5" fill="#1010c0"/><rect x="15" y="1" width="1.5" height="1.5" fill="#1010c0"/><rect x="12.5" y="9.5" width="1.5" height="1.5" fill="#c0c000"/><rect x="10.5" y="7.5" width="1.5" height="1.5" fill="#000"/></g><rect x="1109" y="1001" width="16" height="16" fill="#fff" stroke="#404040" stroke-width="0.8"/><rect x="1110.5" y="1002.5" width="13" height="13" fill="#10a030"/><path d="M1115 1005 V1013 M1119 1005 V1013 M1115 1010 C1116 1012 1119 1012 1119 1010" stroke="#fff" stroke-width="1.6" fill="none"/><rect x="1131" y="1003" width="10" height="8" fill="#3070e0" stroke="#404040" stroke-width="0.8"/><rect x="1127" y="1007" width="10" height="8" fill="#4080f0" stroke="#404040" stroke-width="0.8"/><path d="M1129 1017 H1135" stroke="#505050" stroke-width="1.2"/><path d="M1145 1001 L1149 1001 L1153 1010 L1157 1001 L1162 1001 L1152 1016 Z" fill="#e01020"/><circle cx="1157" cy="1012" r="4" fill="#2a8a40"/><circle cx="1157" cy="1012" r="2.5" fill="#4090e0"/><circle cx="1170" cy="1009" r="7.5" fill="#10c020"/><circle cx="1170" cy="1009" r="5" fill="none" stroke="#006000" stroke-width="1.2"/><circle cx="1170" cy="1009" r="2" fill="none" stroke="#006000" stroke-width="1.2"/><circle cx="1188" cy="1009" r="7.5" fill="#b0b0d8" stroke="#8080a8" stroke-width="0.8"/><path d="M1189 1002 L1185 1010 H1188 L1186 1016 L1191 1007 H1188 Z" fill="#3040a0"/><rect x="1197" y="1002" width="16" height="14" fill="#101a80" stroke="#404040" stroke-width="0.8"/><rect x="1199" y="1004" width="8" height="10" fill="#3050e0"/><rect x="1209" y="1004" width="2" height="2" fill="#f0f0f0"/><rect x="1209" y="1010" width="2" height="2" fill="#f0c000"/><path d="M1216 1005 H1219 L1224 1001 V1017 L1219 1013 H1216 Z" fill="#e8e8f0" stroke="#505878" stroke-width="1"/><path d="M1226 1006 C1228 1008 1228 1010 1226 1012 M1228 1004 C1231 1007 1231 1011 1228 1014" stroke="#40b040" stroke-width="1.2" fill="none"/></svg>
<div style="position:absolute;left:1240px;top:1004px;font-family:'Liberation Sans', sans-serif;font-size:11.5px;font-weight:normal;font-style:normal;color:#000;white-space:pre;line-height:1;letter-spacing:0.333px;">9:28</div>
<div style="position:absolute;left:61px;top:557px;width:183px;height:443px;background:#fff;"></div>
<div style="position:absolute;left:61px;top:557px;width:182px;height:1px;background:#f4f4f4;"></div>
<div style="position:absolute;left:61px;top:557px;width:1px;height:442px;background:#f4f4f4;"></div>
<div style="position:absolute;left:242px;top:557px;width:1px;height:442px;background:#a0a0a4;"></div>
<div style="position:absolute;left:243px;top:558px;width:1px;height:442px;background:#808084;"></div>
<div style="position:absolute;left:61px;top:998px;width:182px;height:1px;background:#a0a0a4;"></div>
<div style="position:absolute;left:62px;top:999px;width:182px;height:1px;background:#808084;"></div>
<div style="position:absolute;left:80px;top:563px;font-family:'Liberation Sans', sans-serif;font-size:10.5px;font-weight:normal;font-style:normal;color:#000;white-space:pre;line-height:1;letter-spacing:0.000px;">Maximize</div>
<div style="position:absolute;left:81px;top:589px;font-family:'Liberation Sans', sans-serif;font-size:11px;font-weight:normal;font-style:normal;color:#000;white-space:pre;line-height:1;letter-spacing:0.000px;">Wireframe</div>
<div style="position:absolute;left:80px;top:606px;font-family:'Liberation Sans', sans-serif;font-size:11px;font-weight:normal;font-style:normal;color:#000;white-space:pre;line-height:1;letter-spacing:0.000px;">Shaded</div>
<div style="position:absolute;left:80px;top:623px;font-family:'Liberation Sans', sans-serif;font-size:11px;font-weight:normal;font-style:normal;color:#000;white-space:pre;line-height:1;letter-spacing:0.000px;">Rendered</div>
<div style="position:absolute;left:80px;top:640px;font-family:'Liberation Sans', sans-serif;font-size:11px;font-weight:normal;font-style:normal;color:#000;white-space:pre;line-height:1;letter-spacing:0.000px;">Ghosted</div>
<div style="position:absolute;left:80px;top:657px;font-family:'Liberation Sans', sans-serif;font-size:11px;font-weight:normal;font-style:normal;color:#000;white-space:pre;line-height:1;letter-spacing:0.000px;">X-Ray</div>
<div style="position:absolute;left:80px;top:674px;font-family:'Liberation Sans', sans-serif;font-size:11px;font-weight:normal;font-style:normal;color:#000;white-space:pre;line-height:1;letter-spacing:-0.111px;">Flat Shade</div>
<div style="position:absolute;left:80px;top:691px;font-family:'Liberation Sans', sans-serif;font-size:10.5px;font-weight:normal;font-style:normal;color:#000;white-space:pre;line-height:1;letter-spacing:0.115px;">Shade Selected Objects Only</div>
<div style="position:absolute;left:80px;top:717px;font-family:'Liberation Sans', sans-serif;font-size:11px;font-weight:normal;font-style:normal;color:#000;white-space:pre;line-height:1;letter-spacing:0.000px;">Pan, Zoom, and Rotate</div>
<div style="position:absolute;left:80px;top:743px;font-family:'Liberation Sans', sans-serif;font-size:10.5px;font-weight:normal;font-style:normal;color:#000;white-space:pre;line-height:1;letter-spacing:0.143px;">Set View</div>
<div style="position:absolute;left:80px;top:760px;font-family:'Liberation Sans', sans-serif;font-size:10.5px;font-weight:normal;font-style:normal;color:#000;white-space:pre;line-height:1;letter-spacing:0.000px;">Set CPlane</div>
<div style="position:absolute;left:80px;top:777px;font-family:'Liberation Sans', sans-serif;font-size:10.5px;font-weight:normal;font-style:normal;color:#000;white-space:pre;line-height:1;letter-spacing:0.111px;">Set Camera</div>
<div style="position:absolute;left:81px;top:803px;font-family:'Liberation Sans', sans-serif;font-size:11px;font-weight:normal;font-style:normal;color:#000;white-space:pre;line-height:1;letter-spacing:0.000px;">Active Viewport</div>
<div style="position:absolute;left:81px;top:820px;font-family:'Liberation Sans', sans-serif;font-size:11px;font-weight:normal;font-style:normal;color:#000;white-space:pre;line-height:1;letter-spacing:-0.071px;">Viewport Layout</div>
<div style="position:absolute;left:80px;top:846px;font-family:'Liberation Sans', sans-serif;font-size:10.5px;font-weight:normal;font-style:normal;color:#000;white-space:pre;line-height:1;letter-spacing:0.062px;">Background Bitmap</div>
<div style="position:absolute;left:80px;top:863px;font-family:'Liberation Sans', sans-serif;font-size:11px;font-weight:normal;font-style:normal;color:#000;white-space:pre;line-height:1;letter-spacing:0.071px;">Grid Options...</div>
<div style="position:absolute;left:80px;top:880px;font-family:'Liberation Sans', sans-serif;font-size:11.5px;font-weight:normal;font-style:normal;color:#000;white-space:pre;line-height:1;letter-spacing:0.000px;">Capture</div>
<div style="position:absolute;left:80px;top:906px;font-family:'Liberation Sans', sans-serif;font-size:10.5px;font-weight:normal;font-style:normal;color:#000;white-space:pre;line-height:1;letter-spacing:0.154px;">Close Viewport</div>
<div style="position:absolute;left:80px;top:932px;font-family:'Liberation Sans', sans-serif;font-size:10.5px;font-weight:normal;font-style:normal;color:#000;white-space:pre;line-height:1;letter-spacing:0.000px;">Remesh</div>
<div style="position:absolute;left:80px;top:949px;font-family:'Liberation Sans', sans-serif;font-size:10.5px;font-weight:normal;font-style:normal;color:#000;white-space:pre;line-height:1;letter-spacing:0.083px;">Print Display</div>
<div style="position:absolute;left:80px;top:966px;font-family:'Liberation Sans', sans-serif;font-size:11px;font-weight:normal;font-style:normal;color:#000;white-space:pre;line-height:1;letter-spacing:0.118px;">Display Options...</div>
<div style="position:absolute;left:81px;top:983px;font-family:'Liberation Sans', sans-serif;font-size:11px;font-weight:normal;font-style:normal;color:#000;white-space:pre;line-height:1;letter-spacing:0.095px;">Viewport Properties...</div>
<div style="position:absolute;left:65px;top:580px;width:176px;height:1px;background:#a8a8ac;"></div>
<div style="position:absolute;left:65px;top:708px;width:176px;height:1px;background:#a8a8ac;"></div>
<div style="position:absolute;left:65px;top:734px;width:176px;height:1px;background:#a8a8ac;"></div>
<div style="position:absolute;left:65px;top:794px;width:176px;height:1px;background:#a8a8ac;"></div>
<div style="position:absolute;left:65px;top:837px;width:176px;height:1px;background:#a8a8ac;"></div>
<div style="position:absolute;left:65px;top:897px;width:176px;height:1px;background:#a8a8ac;"></div>
<div style="position:absolute;left:65px;top:923px;width:176px;height:1px;background:#a8a8ac;"></div>
<svg style="left:0;top:0" width="1280" height="1024"><path d="M231 719 L234.5 722.5 L231 726 Z" fill="#000"/><path d="M231 745 L234.5 748.5 L231 752 Z" fill="#000"/><path d="M231 762 L234.5 765.5 L231 769 Z" fill="#000"/><path d="M231 779 L234.5 782.5 L231 786 Z" fill="#000"/><path d="M231 805 L234.5 808.5 L231 812 Z" fill="#000"/><path d="M231 822 L234.5 825.5 L231 829 Z" fill="#000"/><path d="M231 848 L234.5 851.5 L231 855 Z" fill="#000"/><path d="M231 882 L234.5 885.5 L231 889 Z" fill="#000"/><circle cx="73" cy="628" r="2.2" fill="#000"/></svg>
</body></html>
